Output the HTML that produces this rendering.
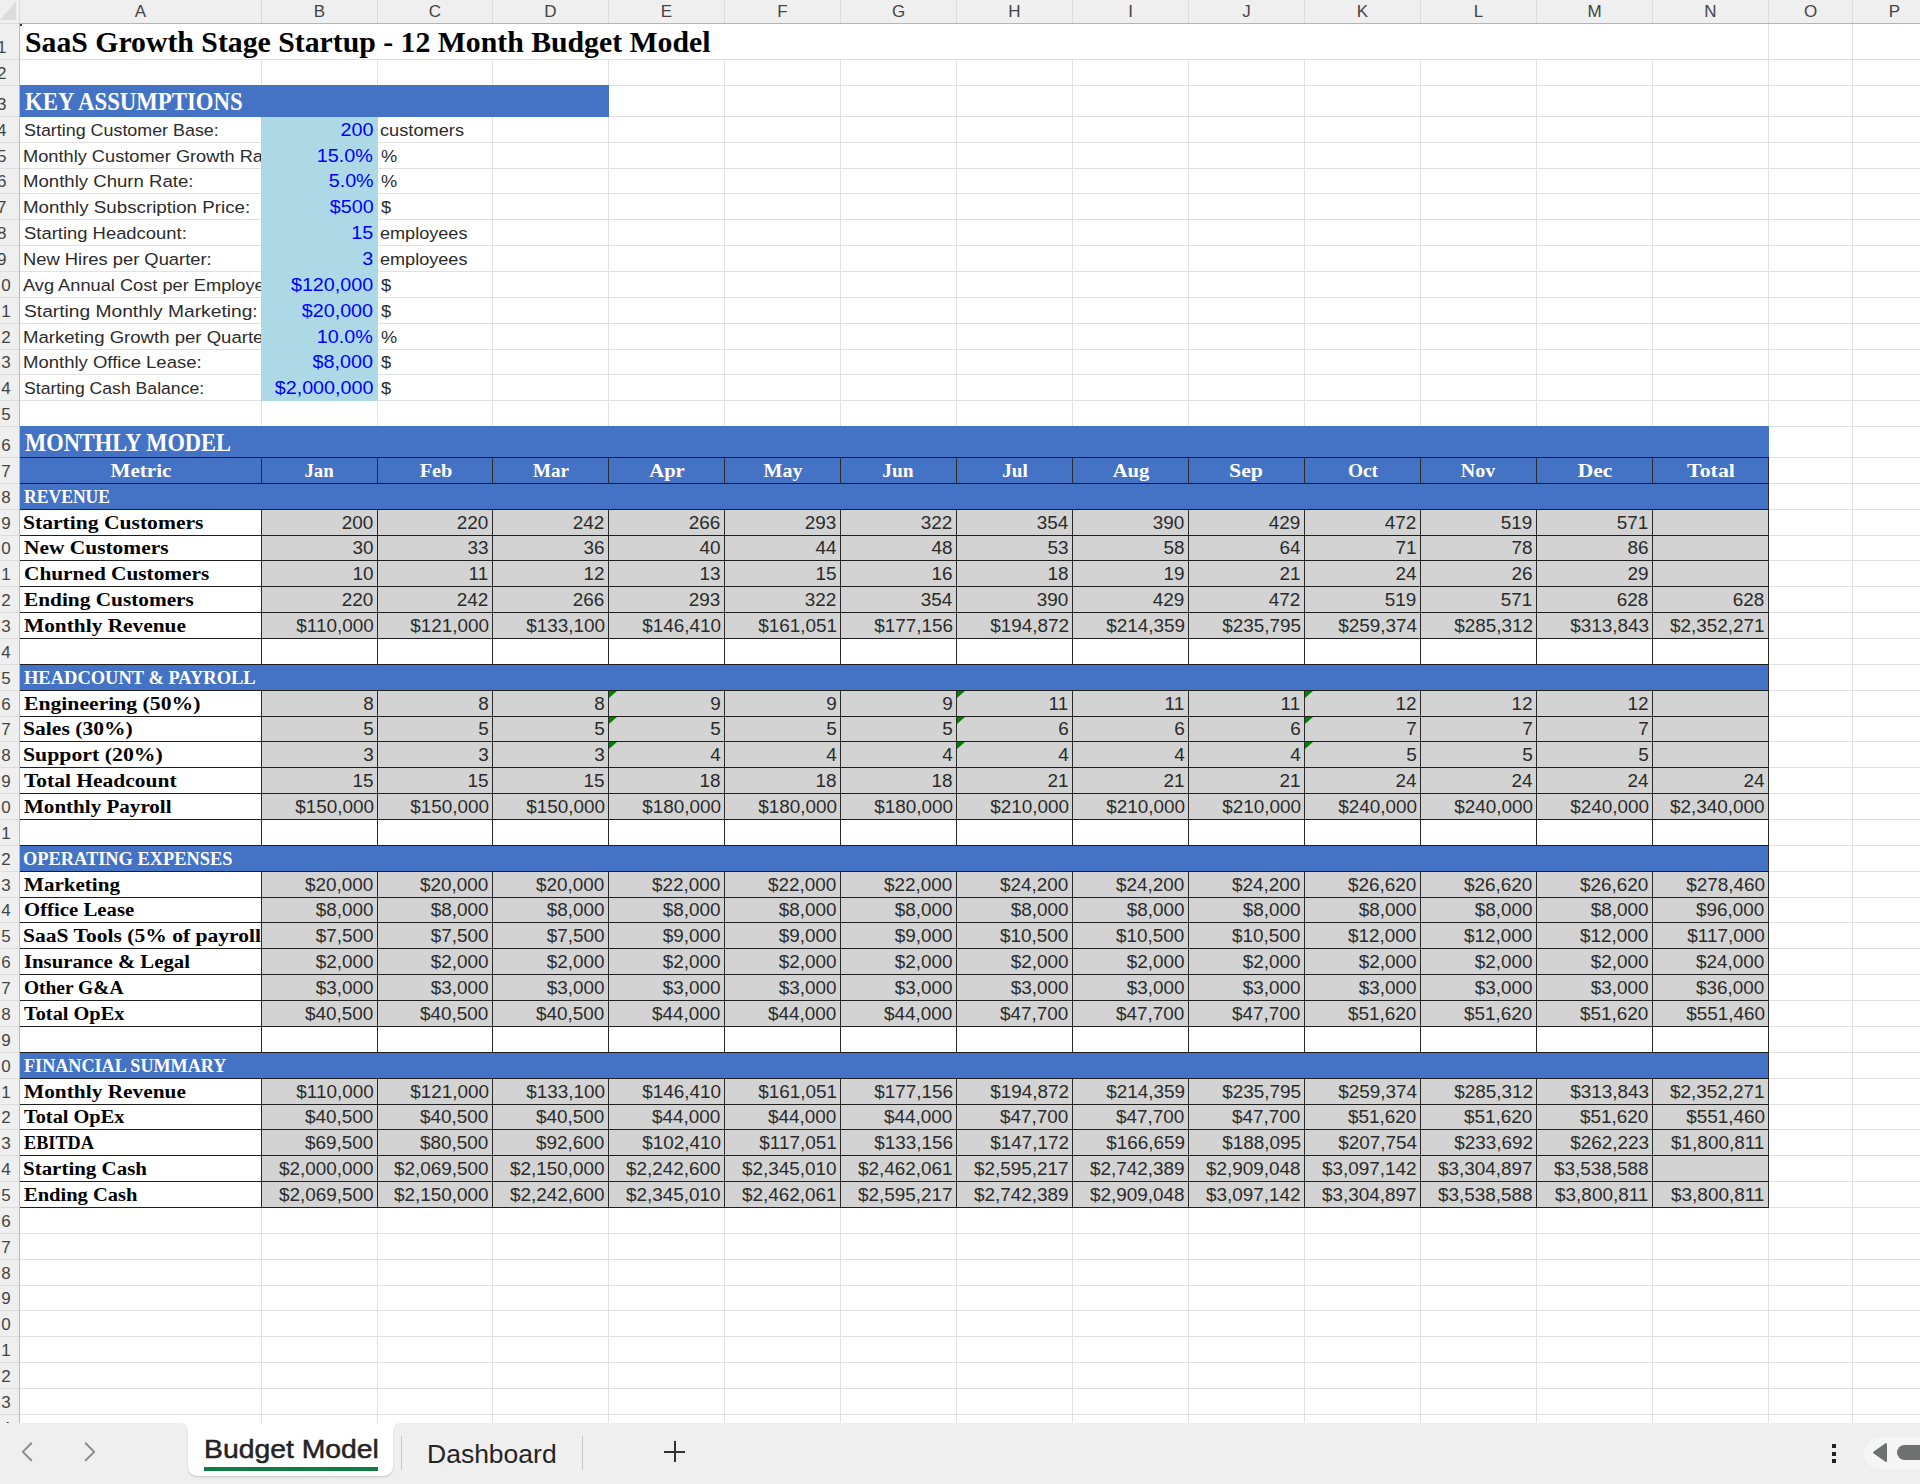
<!DOCTYPE html>
<html><head><meta charset="utf-8"><style>
html,body{margin:0;padding:0;}
body{width:1920px;height:1484px;overflow:hidden;position:relative;background:#fff;}
body div{position:absolute;}
.t{white-space:nowrap;}
</style></head><body>
<div style="left:261px;top:23px;width:1px;height:1400px;background:#e1e1e1;"></div>
<div style="left:377px;top:23px;width:1px;height:1400px;background:#e1e1e1;"></div>
<div style="left:492px;top:23px;width:1px;height:1400px;background:#e1e1e1;"></div>
<div style="left:608px;top:23px;width:1px;height:1400px;background:#e1e1e1;"></div>
<div style="left:724px;top:23px;width:1px;height:1400px;background:#e1e1e1;"></div>
<div style="left:840px;top:23px;width:1px;height:1400px;background:#e1e1e1;"></div>
<div style="left:956px;top:23px;width:1px;height:1400px;background:#e1e1e1;"></div>
<div style="left:1072px;top:23px;width:1px;height:1400px;background:#e1e1e1;"></div>
<div style="left:1188px;top:23px;width:1px;height:1400px;background:#e1e1e1;"></div>
<div style="left:1304px;top:23px;width:1px;height:1400px;background:#e1e1e1;"></div>
<div style="left:1420px;top:23px;width:1px;height:1400px;background:#e1e1e1;"></div>
<div style="left:1536px;top:23px;width:1px;height:1400px;background:#e1e1e1;"></div>
<div style="left:1652px;top:23px;width:1px;height:1400px;background:#e1e1e1;"></div>
<div style="left:1768px;top:23px;width:1px;height:1400px;background:#e1e1e1;"></div>
<div style="left:1852px;top:23px;width:1px;height:1400px;background:#e1e1e1;"></div>
<div style="left:20px;top:59px;width:1900px;height:1px;background:#e1e1e1;"></div>
<div style="left:20px;top:85px;width:1900px;height:1px;background:#e1e1e1;"></div>
<div style="left:20px;top:116px;width:1900px;height:1px;background:#e1e1e1;"></div>
<div style="left:20px;top:142px;width:1900px;height:1px;background:#e1e1e1;"></div>
<div style="left:20px;top:168px;width:1900px;height:1px;background:#e1e1e1;"></div>
<div style="left:20px;top:193px;width:1900px;height:1px;background:#e1e1e1;"></div>
<div style="left:20px;top:219px;width:1900px;height:1px;background:#e1e1e1;"></div>
<div style="left:20px;top:245px;width:1900px;height:1px;background:#e1e1e1;"></div>
<div style="left:20px;top:271px;width:1900px;height:1px;background:#e1e1e1;"></div>
<div style="left:20px;top:297px;width:1900px;height:1px;background:#e1e1e1;"></div>
<div style="left:20px;top:323px;width:1900px;height:1px;background:#e1e1e1;"></div>
<div style="left:20px;top:349px;width:1900px;height:1px;background:#e1e1e1;"></div>
<div style="left:20px;top:374px;width:1900px;height:1px;background:#e1e1e1;"></div>
<div style="left:20px;top:400px;width:1900px;height:1px;background:#e1e1e1;"></div>
<div style="left:20px;top:426px;width:1900px;height:1px;background:#e1e1e1;"></div>
<div style="left:20px;top:457px;width:1900px;height:1px;background:#e1e1e1;"></div>
<div style="left:20px;top:483px;width:1900px;height:1px;background:#e1e1e1;"></div>
<div style="left:20px;top:509px;width:1900px;height:1px;background:#e1e1e1;"></div>
<div style="left:20px;top:535px;width:1900px;height:1px;background:#e1e1e1;"></div>
<div style="left:20px;top:560px;width:1900px;height:1px;background:#e1e1e1;"></div>
<div style="left:20px;top:586px;width:1900px;height:1px;background:#e1e1e1;"></div>
<div style="left:20px;top:612px;width:1900px;height:1px;background:#e1e1e1;"></div>
<div style="left:20px;top:638px;width:1900px;height:1px;background:#e1e1e1;"></div>
<div style="left:20px;top:664px;width:1900px;height:1px;background:#e1e1e1;"></div>
<div style="left:20px;top:690px;width:1900px;height:1px;background:#e1e1e1;"></div>
<div style="left:20px;top:716px;width:1900px;height:1px;background:#e1e1e1;"></div>
<div style="left:20px;top:741px;width:1900px;height:1px;background:#e1e1e1;"></div>
<div style="left:20px;top:767px;width:1900px;height:1px;background:#e1e1e1;"></div>
<div style="left:20px;top:793px;width:1900px;height:1px;background:#e1e1e1;"></div>
<div style="left:20px;top:819px;width:1900px;height:1px;background:#e1e1e1;"></div>
<div style="left:20px;top:845px;width:1900px;height:1px;background:#e1e1e1;"></div>
<div style="left:20px;top:871px;width:1900px;height:1px;background:#e1e1e1;"></div>
<div style="left:20px;top:897px;width:1900px;height:1px;background:#e1e1e1;"></div>
<div style="left:20px;top:922px;width:1900px;height:1px;background:#e1e1e1;"></div>
<div style="left:20px;top:948px;width:1900px;height:1px;background:#e1e1e1;"></div>
<div style="left:20px;top:974px;width:1900px;height:1px;background:#e1e1e1;"></div>
<div style="left:20px;top:1000px;width:1900px;height:1px;background:#e1e1e1;"></div>
<div style="left:20px;top:1026px;width:1900px;height:1px;background:#e1e1e1;"></div>
<div style="left:20px;top:1052px;width:1900px;height:1px;background:#e1e1e1;"></div>
<div style="left:20px;top:1078px;width:1900px;height:1px;background:#e1e1e1;"></div>
<div style="left:20px;top:1104px;width:1900px;height:1px;background:#e1e1e1;"></div>
<div style="left:20px;top:1129px;width:1900px;height:1px;background:#e1e1e1;"></div>
<div style="left:20px;top:1155px;width:1900px;height:1px;background:#e1e1e1;"></div>
<div style="left:20px;top:1181px;width:1900px;height:1px;background:#e1e1e1;"></div>
<div style="left:20px;top:1207px;width:1900px;height:1px;background:#e1e1e1;"></div>
<div style="left:20px;top:1233px;width:1900px;height:1px;background:#e1e1e1;"></div>
<div style="left:20px;top:1259px;width:1900px;height:1px;background:#e1e1e1;"></div>
<div style="left:20px;top:1285px;width:1900px;height:1px;background:#e1e1e1;"></div>
<div style="left:20px;top:1310px;width:1900px;height:1px;background:#e1e1e1;"></div>
<div style="left:20px;top:1336px;width:1900px;height:1px;background:#e1e1e1;"></div>
<div style="left:20px;top:1362px;width:1900px;height:1px;background:#e1e1e1;"></div>
<div style="left:20px;top:1388px;width:1900px;height:1px;background:#e1e1e1;"></div>
<div style="left:20px;top:1414px;width:1900px;height:1px;background:#e1e1e1;"></div>
<div style="left:20px;top:24px;width:1748px;height:35px;background:#fff;"></div>
<div style="left:20px;top:85px;width:589px;height:32px;background:#4472c4;"></div>
<div style="left:261px;top:117px;width:117px;height:284px;background:#add8e6;"></div>
<div style="left:20px;top:426px;width:1749px;height:31px;background:#4472c4;"></div>
<div style="left:20px;top:457px;width:1748px;height:26px;background:#4472c4;"></div>
<div style="left:20px;top:457px;width:1748px;height:26px;background:#4472c4;"></div>
<div style="left:20px;top:483px;width:1748px;height:26px;background:#4472c4;"></div>
<div style="left:20px;top:509px;width:241px;height:26px;background:#fff;"></div>
<div style="left:261px;top:509px;width:1507px;height:26px;background:#d3d3d3;"></div>
<div style="left:20px;top:535px;width:241px;height:25px;background:#fff;"></div>
<div style="left:261px;top:535px;width:1507px;height:25px;background:#d3d3d3;"></div>
<div style="left:20px;top:560px;width:241px;height:26px;background:#fff;"></div>
<div style="left:261px;top:560px;width:1507px;height:26px;background:#d3d3d3;"></div>
<div style="left:20px;top:586px;width:241px;height:26px;background:#fff;"></div>
<div style="left:261px;top:586px;width:1507px;height:26px;background:#d3d3d3;"></div>
<div style="left:20px;top:612px;width:241px;height:26px;background:#fff;"></div>
<div style="left:261px;top:612px;width:1507px;height:26px;background:#d3d3d3;"></div>
<div style="left:20px;top:638px;width:1748px;height:26px;background:#fff;"></div>
<div style="left:20px;top:664px;width:1748px;height:26px;background:#4472c4;"></div>
<div style="left:20px;top:690px;width:241px;height:26px;background:#fff;"></div>
<div style="left:261px;top:690px;width:1507px;height:26px;background:#d3d3d3;"></div>
<div style="left:20px;top:716px;width:241px;height:25px;background:#fff;"></div>
<div style="left:261px;top:716px;width:1507px;height:25px;background:#d3d3d3;"></div>
<div style="left:20px;top:741px;width:241px;height:26px;background:#fff;"></div>
<div style="left:261px;top:741px;width:1507px;height:26px;background:#d3d3d3;"></div>
<div style="left:20px;top:767px;width:241px;height:26px;background:#fff;"></div>
<div style="left:261px;top:767px;width:1507px;height:26px;background:#d3d3d3;"></div>
<div style="left:20px;top:793px;width:241px;height:26px;background:#fff;"></div>
<div style="left:261px;top:793px;width:1507px;height:26px;background:#d3d3d3;"></div>
<div style="left:20px;top:819px;width:1748px;height:26px;background:#fff;"></div>
<div style="left:20px;top:845px;width:1748px;height:26px;background:#4472c4;"></div>
<div style="left:20px;top:871px;width:241px;height:26px;background:#fff;"></div>
<div style="left:261px;top:871px;width:1507px;height:26px;background:#d3d3d3;"></div>
<div style="left:20px;top:897px;width:241px;height:25px;background:#fff;"></div>
<div style="left:261px;top:897px;width:1507px;height:25px;background:#d3d3d3;"></div>
<div style="left:20px;top:922px;width:241px;height:26px;background:#fff;"></div>
<div style="left:261px;top:922px;width:1507px;height:26px;background:#d3d3d3;"></div>
<div style="left:20px;top:948px;width:241px;height:26px;background:#fff;"></div>
<div style="left:261px;top:948px;width:1507px;height:26px;background:#d3d3d3;"></div>
<div style="left:20px;top:974px;width:241px;height:26px;background:#fff;"></div>
<div style="left:261px;top:974px;width:1507px;height:26px;background:#d3d3d3;"></div>
<div style="left:20px;top:1000px;width:241px;height:26px;background:#fff;"></div>
<div style="left:261px;top:1000px;width:1507px;height:26px;background:#d3d3d3;"></div>
<div style="left:20px;top:1026px;width:1748px;height:26px;background:#fff;"></div>
<div style="left:20px;top:1052px;width:1748px;height:26px;background:#4472c4;"></div>
<div style="left:20px;top:1078px;width:241px;height:26px;background:#fff;"></div>
<div style="left:261px;top:1078px;width:1507px;height:26px;background:#d3d3d3;"></div>
<div style="left:20px;top:1104px;width:241px;height:25px;background:#fff;"></div>
<div style="left:261px;top:1104px;width:1507px;height:25px;background:#d3d3d3;"></div>
<div style="left:20px;top:1129px;width:241px;height:26px;background:#fff;"></div>
<div style="left:261px;top:1129px;width:1507px;height:26px;background:#d3d3d3;"></div>
<div style="left:20px;top:1155px;width:241px;height:26px;background:#fff;"></div>
<div style="left:261px;top:1155px;width:1507px;height:26px;background:#d3d3d3;"></div>
<div style="left:20px;top:1181px;width:241px;height:26px;background:#fff;"></div>
<div style="left:261px;top:1181px;width:1507px;height:26px;background:#d3d3d3;"></div>
<div style="left:20px;top:457px;width:1749px;height:1px;background:#1e1e1e;"></div>
<div style="left:20px;top:483px;width:1749px;height:1px;background:#1e1e1e;"></div>
<div style="left:20px;top:509px;width:1749px;height:1px;background:#1e1e1e;"></div>
<div style="left:20px;top:535px;width:1749px;height:1px;background:#1e1e1e;"></div>
<div style="left:20px;top:560px;width:1749px;height:1px;background:#1e1e1e;"></div>
<div style="left:20px;top:586px;width:1749px;height:1px;background:#1e1e1e;"></div>
<div style="left:20px;top:612px;width:1749px;height:1px;background:#1e1e1e;"></div>
<div style="left:20px;top:638px;width:1749px;height:1px;background:#1e1e1e;"></div>
<div style="left:20px;top:664px;width:1749px;height:1px;background:#1e1e1e;"></div>
<div style="left:20px;top:690px;width:1749px;height:1px;background:#1e1e1e;"></div>
<div style="left:20px;top:716px;width:1749px;height:1px;background:#1e1e1e;"></div>
<div style="left:20px;top:741px;width:1749px;height:1px;background:#1e1e1e;"></div>
<div style="left:20px;top:767px;width:1749px;height:1px;background:#1e1e1e;"></div>
<div style="left:20px;top:793px;width:1749px;height:1px;background:#1e1e1e;"></div>
<div style="left:20px;top:819px;width:1749px;height:1px;background:#1e1e1e;"></div>
<div style="left:20px;top:845px;width:1749px;height:1px;background:#1e1e1e;"></div>
<div style="left:20px;top:871px;width:1749px;height:1px;background:#1e1e1e;"></div>
<div style="left:20px;top:897px;width:1749px;height:1px;background:#1e1e1e;"></div>
<div style="left:20px;top:922px;width:1749px;height:1px;background:#1e1e1e;"></div>
<div style="left:20px;top:948px;width:1749px;height:1px;background:#1e1e1e;"></div>
<div style="left:20px;top:974px;width:1749px;height:1px;background:#1e1e1e;"></div>
<div style="left:20px;top:1000px;width:1749px;height:1px;background:#1e1e1e;"></div>
<div style="left:20px;top:1026px;width:1749px;height:1px;background:#1e1e1e;"></div>
<div style="left:20px;top:1052px;width:1749px;height:1px;background:#1e1e1e;"></div>
<div style="left:20px;top:1078px;width:1749px;height:1px;background:#1e1e1e;"></div>
<div style="left:20px;top:1104px;width:1749px;height:1px;background:#1e1e1e;"></div>
<div style="left:20px;top:1129px;width:1749px;height:1px;background:#1e1e1e;"></div>
<div style="left:20px;top:1155px;width:1749px;height:1px;background:#1e1e1e;"></div>
<div style="left:20px;top:1181px;width:1749px;height:1px;background:#1e1e1e;"></div>
<div style="left:20px;top:1207px;width:1749px;height:1px;background:#1e1e1e;"></div>
<div style="left:261px;top:457px;width:1px;height:27px;background:#2a2a2a;"></div>
<div style="left:377px;top:457px;width:1px;height:27px;background:#2a2a2a;"></div>
<div style="left:492px;top:457px;width:1px;height:27px;background:#2a2a2a;"></div>
<div style="left:608px;top:457px;width:1px;height:27px;background:#2a2a2a;"></div>
<div style="left:724px;top:457px;width:1px;height:27px;background:#2a2a2a;"></div>
<div style="left:840px;top:457px;width:1px;height:27px;background:#2a2a2a;"></div>
<div style="left:956px;top:457px;width:1px;height:27px;background:#2a2a2a;"></div>
<div style="left:1072px;top:457px;width:1px;height:27px;background:#2a2a2a;"></div>
<div style="left:1188px;top:457px;width:1px;height:27px;background:#2a2a2a;"></div>
<div style="left:1304px;top:457px;width:1px;height:27px;background:#2a2a2a;"></div>
<div style="left:1420px;top:457px;width:1px;height:27px;background:#2a2a2a;"></div>
<div style="left:1536px;top:457px;width:1px;height:27px;background:#2a2a2a;"></div>
<div style="left:1652px;top:457px;width:1px;height:27px;background:#2a2a2a;"></div>
<div style="left:1768px;top:457px;width:1px;height:27px;background:#2a2a2a;"></div>
<div style="left:1768px;top:483px;width:1px;height:27px;background:#2a2a2a;"></div>
<div style="left:261px;top:509px;width:1px;height:27px;background:#2a2a2a;"></div>
<div style="left:377px;top:509px;width:1px;height:27px;background:#2a2a2a;"></div>
<div style="left:492px;top:509px;width:1px;height:27px;background:#2a2a2a;"></div>
<div style="left:608px;top:509px;width:1px;height:27px;background:#2a2a2a;"></div>
<div style="left:724px;top:509px;width:1px;height:27px;background:#2a2a2a;"></div>
<div style="left:840px;top:509px;width:1px;height:27px;background:#2a2a2a;"></div>
<div style="left:956px;top:509px;width:1px;height:27px;background:#2a2a2a;"></div>
<div style="left:1072px;top:509px;width:1px;height:27px;background:#2a2a2a;"></div>
<div style="left:1188px;top:509px;width:1px;height:27px;background:#2a2a2a;"></div>
<div style="left:1304px;top:509px;width:1px;height:27px;background:#2a2a2a;"></div>
<div style="left:1420px;top:509px;width:1px;height:27px;background:#2a2a2a;"></div>
<div style="left:1536px;top:509px;width:1px;height:27px;background:#2a2a2a;"></div>
<div style="left:1652px;top:509px;width:1px;height:27px;background:#2a2a2a;"></div>
<div style="left:1768px;top:509px;width:1px;height:27px;background:#2a2a2a;"></div>
<div style="left:261px;top:535px;width:1px;height:26px;background:#2a2a2a;"></div>
<div style="left:377px;top:535px;width:1px;height:26px;background:#2a2a2a;"></div>
<div style="left:492px;top:535px;width:1px;height:26px;background:#2a2a2a;"></div>
<div style="left:608px;top:535px;width:1px;height:26px;background:#2a2a2a;"></div>
<div style="left:724px;top:535px;width:1px;height:26px;background:#2a2a2a;"></div>
<div style="left:840px;top:535px;width:1px;height:26px;background:#2a2a2a;"></div>
<div style="left:956px;top:535px;width:1px;height:26px;background:#2a2a2a;"></div>
<div style="left:1072px;top:535px;width:1px;height:26px;background:#2a2a2a;"></div>
<div style="left:1188px;top:535px;width:1px;height:26px;background:#2a2a2a;"></div>
<div style="left:1304px;top:535px;width:1px;height:26px;background:#2a2a2a;"></div>
<div style="left:1420px;top:535px;width:1px;height:26px;background:#2a2a2a;"></div>
<div style="left:1536px;top:535px;width:1px;height:26px;background:#2a2a2a;"></div>
<div style="left:1652px;top:535px;width:1px;height:26px;background:#2a2a2a;"></div>
<div style="left:1768px;top:535px;width:1px;height:26px;background:#2a2a2a;"></div>
<div style="left:261px;top:560px;width:1px;height:27px;background:#2a2a2a;"></div>
<div style="left:377px;top:560px;width:1px;height:27px;background:#2a2a2a;"></div>
<div style="left:492px;top:560px;width:1px;height:27px;background:#2a2a2a;"></div>
<div style="left:608px;top:560px;width:1px;height:27px;background:#2a2a2a;"></div>
<div style="left:724px;top:560px;width:1px;height:27px;background:#2a2a2a;"></div>
<div style="left:840px;top:560px;width:1px;height:27px;background:#2a2a2a;"></div>
<div style="left:956px;top:560px;width:1px;height:27px;background:#2a2a2a;"></div>
<div style="left:1072px;top:560px;width:1px;height:27px;background:#2a2a2a;"></div>
<div style="left:1188px;top:560px;width:1px;height:27px;background:#2a2a2a;"></div>
<div style="left:1304px;top:560px;width:1px;height:27px;background:#2a2a2a;"></div>
<div style="left:1420px;top:560px;width:1px;height:27px;background:#2a2a2a;"></div>
<div style="left:1536px;top:560px;width:1px;height:27px;background:#2a2a2a;"></div>
<div style="left:1652px;top:560px;width:1px;height:27px;background:#2a2a2a;"></div>
<div style="left:1768px;top:560px;width:1px;height:27px;background:#2a2a2a;"></div>
<div style="left:261px;top:586px;width:1px;height:27px;background:#2a2a2a;"></div>
<div style="left:377px;top:586px;width:1px;height:27px;background:#2a2a2a;"></div>
<div style="left:492px;top:586px;width:1px;height:27px;background:#2a2a2a;"></div>
<div style="left:608px;top:586px;width:1px;height:27px;background:#2a2a2a;"></div>
<div style="left:724px;top:586px;width:1px;height:27px;background:#2a2a2a;"></div>
<div style="left:840px;top:586px;width:1px;height:27px;background:#2a2a2a;"></div>
<div style="left:956px;top:586px;width:1px;height:27px;background:#2a2a2a;"></div>
<div style="left:1072px;top:586px;width:1px;height:27px;background:#2a2a2a;"></div>
<div style="left:1188px;top:586px;width:1px;height:27px;background:#2a2a2a;"></div>
<div style="left:1304px;top:586px;width:1px;height:27px;background:#2a2a2a;"></div>
<div style="left:1420px;top:586px;width:1px;height:27px;background:#2a2a2a;"></div>
<div style="left:1536px;top:586px;width:1px;height:27px;background:#2a2a2a;"></div>
<div style="left:1652px;top:586px;width:1px;height:27px;background:#2a2a2a;"></div>
<div style="left:1768px;top:586px;width:1px;height:27px;background:#2a2a2a;"></div>
<div style="left:261px;top:612px;width:1px;height:27px;background:#2a2a2a;"></div>
<div style="left:377px;top:612px;width:1px;height:27px;background:#2a2a2a;"></div>
<div style="left:492px;top:612px;width:1px;height:27px;background:#2a2a2a;"></div>
<div style="left:608px;top:612px;width:1px;height:27px;background:#2a2a2a;"></div>
<div style="left:724px;top:612px;width:1px;height:27px;background:#2a2a2a;"></div>
<div style="left:840px;top:612px;width:1px;height:27px;background:#2a2a2a;"></div>
<div style="left:956px;top:612px;width:1px;height:27px;background:#2a2a2a;"></div>
<div style="left:1072px;top:612px;width:1px;height:27px;background:#2a2a2a;"></div>
<div style="left:1188px;top:612px;width:1px;height:27px;background:#2a2a2a;"></div>
<div style="left:1304px;top:612px;width:1px;height:27px;background:#2a2a2a;"></div>
<div style="left:1420px;top:612px;width:1px;height:27px;background:#2a2a2a;"></div>
<div style="left:1536px;top:612px;width:1px;height:27px;background:#2a2a2a;"></div>
<div style="left:1652px;top:612px;width:1px;height:27px;background:#2a2a2a;"></div>
<div style="left:1768px;top:612px;width:1px;height:27px;background:#2a2a2a;"></div>
<div style="left:261px;top:638px;width:1px;height:27px;background:#2a2a2a;"></div>
<div style="left:377px;top:638px;width:1px;height:27px;background:#2a2a2a;"></div>
<div style="left:492px;top:638px;width:1px;height:27px;background:#2a2a2a;"></div>
<div style="left:608px;top:638px;width:1px;height:27px;background:#2a2a2a;"></div>
<div style="left:724px;top:638px;width:1px;height:27px;background:#2a2a2a;"></div>
<div style="left:840px;top:638px;width:1px;height:27px;background:#2a2a2a;"></div>
<div style="left:956px;top:638px;width:1px;height:27px;background:#2a2a2a;"></div>
<div style="left:1072px;top:638px;width:1px;height:27px;background:#2a2a2a;"></div>
<div style="left:1188px;top:638px;width:1px;height:27px;background:#2a2a2a;"></div>
<div style="left:1304px;top:638px;width:1px;height:27px;background:#2a2a2a;"></div>
<div style="left:1420px;top:638px;width:1px;height:27px;background:#2a2a2a;"></div>
<div style="left:1536px;top:638px;width:1px;height:27px;background:#2a2a2a;"></div>
<div style="left:1652px;top:638px;width:1px;height:27px;background:#2a2a2a;"></div>
<div style="left:1768px;top:638px;width:1px;height:27px;background:#2a2a2a;"></div>
<div style="left:1768px;top:664px;width:1px;height:27px;background:#2a2a2a;"></div>
<div style="left:261px;top:690px;width:1px;height:27px;background:#2a2a2a;"></div>
<div style="left:377px;top:690px;width:1px;height:27px;background:#2a2a2a;"></div>
<div style="left:492px;top:690px;width:1px;height:27px;background:#2a2a2a;"></div>
<div style="left:608px;top:690px;width:1px;height:27px;background:#2a2a2a;"></div>
<div style="left:724px;top:690px;width:1px;height:27px;background:#2a2a2a;"></div>
<div style="left:840px;top:690px;width:1px;height:27px;background:#2a2a2a;"></div>
<div style="left:956px;top:690px;width:1px;height:27px;background:#2a2a2a;"></div>
<div style="left:1072px;top:690px;width:1px;height:27px;background:#2a2a2a;"></div>
<div style="left:1188px;top:690px;width:1px;height:27px;background:#2a2a2a;"></div>
<div style="left:1304px;top:690px;width:1px;height:27px;background:#2a2a2a;"></div>
<div style="left:1420px;top:690px;width:1px;height:27px;background:#2a2a2a;"></div>
<div style="left:1536px;top:690px;width:1px;height:27px;background:#2a2a2a;"></div>
<div style="left:1652px;top:690px;width:1px;height:27px;background:#2a2a2a;"></div>
<div style="left:1768px;top:690px;width:1px;height:27px;background:#2a2a2a;"></div>
<div style="left:261px;top:716px;width:1px;height:26px;background:#2a2a2a;"></div>
<div style="left:377px;top:716px;width:1px;height:26px;background:#2a2a2a;"></div>
<div style="left:492px;top:716px;width:1px;height:26px;background:#2a2a2a;"></div>
<div style="left:608px;top:716px;width:1px;height:26px;background:#2a2a2a;"></div>
<div style="left:724px;top:716px;width:1px;height:26px;background:#2a2a2a;"></div>
<div style="left:840px;top:716px;width:1px;height:26px;background:#2a2a2a;"></div>
<div style="left:956px;top:716px;width:1px;height:26px;background:#2a2a2a;"></div>
<div style="left:1072px;top:716px;width:1px;height:26px;background:#2a2a2a;"></div>
<div style="left:1188px;top:716px;width:1px;height:26px;background:#2a2a2a;"></div>
<div style="left:1304px;top:716px;width:1px;height:26px;background:#2a2a2a;"></div>
<div style="left:1420px;top:716px;width:1px;height:26px;background:#2a2a2a;"></div>
<div style="left:1536px;top:716px;width:1px;height:26px;background:#2a2a2a;"></div>
<div style="left:1652px;top:716px;width:1px;height:26px;background:#2a2a2a;"></div>
<div style="left:1768px;top:716px;width:1px;height:26px;background:#2a2a2a;"></div>
<div style="left:261px;top:741px;width:1px;height:27px;background:#2a2a2a;"></div>
<div style="left:377px;top:741px;width:1px;height:27px;background:#2a2a2a;"></div>
<div style="left:492px;top:741px;width:1px;height:27px;background:#2a2a2a;"></div>
<div style="left:608px;top:741px;width:1px;height:27px;background:#2a2a2a;"></div>
<div style="left:724px;top:741px;width:1px;height:27px;background:#2a2a2a;"></div>
<div style="left:840px;top:741px;width:1px;height:27px;background:#2a2a2a;"></div>
<div style="left:956px;top:741px;width:1px;height:27px;background:#2a2a2a;"></div>
<div style="left:1072px;top:741px;width:1px;height:27px;background:#2a2a2a;"></div>
<div style="left:1188px;top:741px;width:1px;height:27px;background:#2a2a2a;"></div>
<div style="left:1304px;top:741px;width:1px;height:27px;background:#2a2a2a;"></div>
<div style="left:1420px;top:741px;width:1px;height:27px;background:#2a2a2a;"></div>
<div style="left:1536px;top:741px;width:1px;height:27px;background:#2a2a2a;"></div>
<div style="left:1652px;top:741px;width:1px;height:27px;background:#2a2a2a;"></div>
<div style="left:1768px;top:741px;width:1px;height:27px;background:#2a2a2a;"></div>
<div style="left:261px;top:767px;width:1px;height:27px;background:#2a2a2a;"></div>
<div style="left:377px;top:767px;width:1px;height:27px;background:#2a2a2a;"></div>
<div style="left:492px;top:767px;width:1px;height:27px;background:#2a2a2a;"></div>
<div style="left:608px;top:767px;width:1px;height:27px;background:#2a2a2a;"></div>
<div style="left:724px;top:767px;width:1px;height:27px;background:#2a2a2a;"></div>
<div style="left:840px;top:767px;width:1px;height:27px;background:#2a2a2a;"></div>
<div style="left:956px;top:767px;width:1px;height:27px;background:#2a2a2a;"></div>
<div style="left:1072px;top:767px;width:1px;height:27px;background:#2a2a2a;"></div>
<div style="left:1188px;top:767px;width:1px;height:27px;background:#2a2a2a;"></div>
<div style="left:1304px;top:767px;width:1px;height:27px;background:#2a2a2a;"></div>
<div style="left:1420px;top:767px;width:1px;height:27px;background:#2a2a2a;"></div>
<div style="left:1536px;top:767px;width:1px;height:27px;background:#2a2a2a;"></div>
<div style="left:1652px;top:767px;width:1px;height:27px;background:#2a2a2a;"></div>
<div style="left:1768px;top:767px;width:1px;height:27px;background:#2a2a2a;"></div>
<div style="left:261px;top:793px;width:1px;height:27px;background:#2a2a2a;"></div>
<div style="left:377px;top:793px;width:1px;height:27px;background:#2a2a2a;"></div>
<div style="left:492px;top:793px;width:1px;height:27px;background:#2a2a2a;"></div>
<div style="left:608px;top:793px;width:1px;height:27px;background:#2a2a2a;"></div>
<div style="left:724px;top:793px;width:1px;height:27px;background:#2a2a2a;"></div>
<div style="left:840px;top:793px;width:1px;height:27px;background:#2a2a2a;"></div>
<div style="left:956px;top:793px;width:1px;height:27px;background:#2a2a2a;"></div>
<div style="left:1072px;top:793px;width:1px;height:27px;background:#2a2a2a;"></div>
<div style="left:1188px;top:793px;width:1px;height:27px;background:#2a2a2a;"></div>
<div style="left:1304px;top:793px;width:1px;height:27px;background:#2a2a2a;"></div>
<div style="left:1420px;top:793px;width:1px;height:27px;background:#2a2a2a;"></div>
<div style="left:1536px;top:793px;width:1px;height:27px;background:#2a2a2a;"></div>
<div style="left:1652px;top:793px;width:1px;height:27px;background:#2a2a2a;"></div>
<div style="left:1768px;top:793px;width:1px;height:27px;background:#2a2a2a;"></div>
<div style="left:261px;top:819px;width:1px;height:27px;background:#2a2a2a;"></div>
<div style="left:377px;top:819px;width:1px;height:27px;background:#2a2a2a;"></div>
<div style="left:492px;top:819px;width:1px;height:27px;background:#2a2a2a;"></div>
<div style="left:608px;top:819px;width:1px;height:27px;background:#2a2a2a;"></div>
<div style="left:724px;top:819px;width:1px;height:27px;background:#2a2a2a;"></div>
<div style="left:840px;top:819px;width:1px;height:27px;background:#2a2a2a;"></div>
<div style="left:956px;top:819px;width:1px;height:27px;background:#2a2a2a;"></div>
<div style="left:1072px;top:819px;width:1px;height:27px;background:#2a2a2a;"></div>
<div style="left:1188px;top:819px;width:1px;height:27px;background:#2a2a2a;"></div>
<div style="left:1304px;top:819px;width:1px;height:27px;background:#2a2a2a;"></div>
<div style="left:1420px;top:819px;width:1px;height:27px;background:#2a2a2a;"></div>
<div style="left:1536px;top:819px;width:1px;height:27px;background:#2a2a2a;"></div>
<div style="left:1652px;top:819px;width:1px;height:27px;background:#2a2a2a;"></div>
<div style="left:1768px;top:819px;width:1px;height:27px;background:#2a2a2a;"></div>
<div style="left:1768px;top:845px;width:1px;height:27px;background:#2a2a2a;"></div>
<div style="left:261px;top:871px;width:1px;height:27px;background:#2a2a2a;"></div>
<div style="left:377px;top:871px;width:1px;height:27px;background:#2a2a2a;"></div>
<div style="left:492px;top:871px;width:1px;height:27px;background:#2a2a2a;"></div>
<div style="left:608px;top:871px;width:1px;height:27px;background:#2a2a2a;"></div>
<div style="left:724px;top:871px;width:1px;height:27px;background:#2a2a2a;"></div>
<div style="left:840px;top:871px;width:1px;height:27px;background:#2a2a2a;"></div>
<div style="left:956px;top:871px;width:1px;height:27px;background:#2a2a2a;"></div>
<div style="left:1072px;top:871px;width:1px;height:27px;background:#2a2a2a;"></div>
<div style="left:1188px;top:871px;width:1px;height:27px;background:#2a2a2a;"></div>
<div style="left:1304px;top:871px;width:1px;height:27px;background:#2a2a2a;"></div>
<div style="left:1420px;top:871px;width:1px;height:27px;background:#2a2a2a;"></div>
<div style="left:1536px;top:871px;width:1px;height:27px;background:#2a2a2a;"></div>
<div style="left:1652px;top:871px;width:1px;height:27px;background:#2a2a2a;"></div>
<div style="left:1768px;top:871px;width:1px;height:27px;background:#2a2a2a;"></div>
<div style="left:261px;top:897px;width:1px;height:26px;background:#2a2a2a;"></div>
<div style="left:377px;top:897px;width:1px;height:26px;background:#2a2a2a;"></div>
<div style="left:492px;top:897px;width:1px;height:26px;background:#2a2a2a;"></div>
<div style="left:608px;top:897px;width:1px;height:26px;background:#2a2a2a;"></div>
<div style="left:724px;top:897px;width:1px;height:26px;background:#2a2a2a;"></div>
<div style="left:840px;top:897px;width:1px;height:26px;background:#2a2a2a;"></div>
<div style="left:956px;top:897px;width:1px;height:26px;background:#2a2a2a;"></div>
<div style="left:1072px;top:897px;width:1px;height:26px;background:#2a2a2a;"></div>
<div style="left:1188px;top:897px;width:1px;height:26px;background:#2a2a2a;"></div>
<div style="left:1304px;top:897px;width:1px;height:26px;background:#2a2a2a;"></div>
<div style="left:1420px;top:897px;width:1px;height:26px;background:#2a2a2a;"></div>
<div style="left:1536px;top:897px;width:1px;height:26px;background:#2a2a2a;"></div>
<div style="left:1652px;top:897px;width:1px;height:26px;background:#2a2a2a;"></div>
<div style="left:1768px;top:897px;width:1px;height:26px;background:#2a2a2a;"></div>
<div style="left:261px;top:922px;width:1px;height:27px;background:#2a2a2a;"></div>
<div style="left:377px;top:922px;width:1px;height:27px;background:#2a2a2a;"></div>
<div style="left:492px;top:922px;width:1px;height:27px;background:#2a2a2a;"></div>
<div style="left:608px;top:922px;width:1px;height:27px;background:#2a2a2a;"></div>
<div style="left:724px;top:922px;width:1px;height:27px;background:#2a2a2a;"></div>
<div style="left:840px;top:922px;width:1px;height:27px;background:#2a2a2a;"></div>
<div style="left:956px;top:922px;width:1px;height:27px;background:#2a2a2a;"></div>
<div style="left:1072px;top:922px;width:1px;height:27px;background:#2a2a2a;"></div>
<div style="left:1188px;top:922px;width:1px;height:27px;background:#2a2a2a;"></div>
<div style="left:1304px;top:922px;width:1px;height:27px;background:#2a2a2a;"></div>
<div style="left:1420px;top:922px;width:1px;height:27px;background:#2a2a2a;"></div>
<div style="left:1536px;top:922px;width:1px;height:27px;background:#2a2a2a;"></div>
<div style="left:1652px;top:922px;width:1px;height:27px;background:#2a2a2a;"></div>
<div style="left:1768px;top:922px;width:1px;height:27px;background:#2a2a2a;"></div>
<div style="left:261px;top:948px;width:1px;height:27px;background:#2a2a2a;"></div>
<div style="left:377px;top:948px;width:1px;height:27px;background:#2a2a2a;"></div>
<div style="left:492px;top:948px;width:1px;height:27px;background:#2a2a2a;"></div>
<div style="left:608px;top:948px;width:1px;height:27px;background:#2a2a2a;"></div>
<div style="left:724px;top:948px;width:1px;height:27px;background:#2a2a2a;"></div>
<div style="left:840px;top:948px;width:1px;height:27px;background:#2a2a2a;"></div>
<div style="left:956px;top:948px;width:1px;height:27px;background:#2a2a2a;"></div>
<div style="left:1072px;top:948px;width:1px;height:27px;background:#2a2a2a;"></div>
<div style="left:1188px;top:948px;width:1px;height:27px;background:#2a2a2a;"></div>
<div style="left:1304px;top:948px;width:1px;height:27px;background:#2a2a2a;"></div>
<div style="left:1420px;top:948px;width:1px;height:27px;background:#2a2a2a;"></div>
<div style="left:1536px;top:948px;width:1px;height:27px;background:#2a2a2a;"></div>
<div style="left:1652px;top:948px;width:1px;height:27px;background:#2a2a2a;"></div>
<div style="left:1768px;top:948px;width:1px;height:27px;background:#2a2a2a;"></div>
<div style="left:261px;top:974px;width:1px;height:27px;background:#2a2a2a;"></div>
<div style="left:377px;top:974px;width:1px;height:27px;background:#2a2a2a;"></div>
<div style="left:492px;top:974px;width:1px;height:27px;background:#2a2a2a;"></div>
<div style="left:608px;top:974px;width:1px;height:27px;background:#2a2a2a;"></div>
<div style="left:724px;top:974px;width:1px;height:27px;background:#2a2a2a;"></div>
<div style="left:840px;top:974px;width:1px;height:27px;background:#2a2a2a;"></div>
<div style="left:956px;top:974px;width:1px;height:27px;background:#2a2a2a;"></div>
<div style="left:1072px;top:974px;width:1px;height:27px;background:#2a2a2a;"></div>
<div style="left:1188px;top:974px;width:1px;height:27px;background:#2a2a2a;"></div>
<div style="left:1304px;top:974px;width:1px;height:27px;background:#2a2a2a;"></div>
<div style="left:1420px;top:974px;width:1px;height:27px;background:#2a2a2a;"></div>
<div style="left:1536px;top:974px;width:1px;height:27px;background:#2a2a2a;"></div>
<div style="left:1652px;top:974px;width:1px;height:27px;background:#2a2a2a;"></div>
<div style="left:1768px;top:974px;width:1px;height:27px;background:#2a2a2a;"></div>
<div style="left:261px;top:1000px;width:1px;height:27px;background:#2a2a2a;"></div>
<div style="left:377px;top:1000px;width:1px;height:27px;background:#2a2a2a;"></div>
<div style="left:492px;top:1000px;width:1px;height:27px;background:#2a2a2a;"></div>
<div style="left:608px;top:1000px;width:1px;height:27px;background:#2a2a2a;"></div>
<div style="left:724px;top:1000px;width:1px;height:27px;background:#2a2a2a;"></div>
<div style="left:840px;top:1000px;width:1px;height:27px;background:#2a2a2a;"></div>
<div style="left:956px;top:1000px;width:1px;height:27px;background:#2a2a2a;"></div>
<div style="left:1072px;top:1000px;width:1px;height:27px;background:#2a2a2a;"></div>
<div style="left:1188px;top:1000px;width:1px;height:27px;background:#2a2a2a;"></div>
<div style="left:1304px;top:1000px;width:1px;height:27px;background:#2a2a2a;"></div>
<div style="left:1420px;top:1000px;width:1px;height:27px;background:#2a2a2a;"></div>
<div style="left:1536px;top:1000px;width:1px;height:27px;background:#2a2a2a;"></div>
<div style="left:1652px;top:1000px;width:1px;height:27px;background:#2a2a2a;"></div>
<div style="left:1768px;top:1000px;width:1px;height:27px;background:#2a2a2a;"></div>
<div style="left:261px;top:1026px;width:1px;height:27px;background:#2a2a2a;"></div>
<div style="left:377px;top:1026px;width:1px;height:27px;background:#2a2a2a;"></div>
<div style="left:492px;top:1026px;width:1px;height:27px;background:#2a2a2a;"></div>
<div style="left:608px;top:1026px;width:1px;height:27px;background:#2a2a2a;"></div>
<div style="left:724px;top:1026px;width:1px;height:27px;background:#2a2a2a;"></div>
<div style="left:840px;top:1026px;width:1px;height:27px;background:#2a2a2a;"></div>
<div style="left:956px;top:1026px;width:1px;height:27px;background:#2a2a2a;"></div>
<div style="left:1072px;top:1026px;width:1px;height:27px;background:#2a2a2a;"></div>
<div style="left:1188px;top:1026px;width:1px;height:27px;background:#2a2a2a;"></div>
<div style="left:1304px;top:1026px;width:1px;height:27px;background:#2a2a2a;"></div>
<div style="left:1420px;top:1026px;width:1px;height:27px;background:#2a2a2a;"></div>
<div style="left:1536px;top:1026px;width:1px;height:27px;background:#2a2a2a;"></div>
<div style="left:1652px;top:1026px;width:1px;height:27px;background:#2a2a2a;"></div>
<div style="left:1768px;top:1026px;width:1px;height:27px;background:#2a2a2a;"></div>
<div style="left:1768px;top:1052px;width:1px;height:27px;background:#2a2a2a;"></div>
<div style="left:261px;top:1078px;width:1px;height:27px;background:#2a2a2a;"></div>
<div style="left:377px;top:1078px;width:1px;height:27px;background:#2a2a2a;"></div>
<div style="left:492px;top:1078px;width:1px;height:27px;background:#2a2a2a;"></div>
<div style="left:608px;top:1078px;width:1px;height:27px;background:#2a2a2a;"></div>
<div style="left:724px;top:1078px;width:1px;height:27px;background:#2a2a2a;"></div>
<div style="left:840px;top:1078px;width:1px;height:27px;background:#2a2a2a;"></div>
<div style="left:956px;top:1078px;width:1px;height:27px;background:#2a2a2a;"></div>
<div style="left:1072px;top:1078px;width:1px;height:27px;background:#2a2a2a;"></div>
<div style="left:1188px;top:1078px;width:1px;height:27px;background:#2a2a2a;"></div>
<div style="left:1304px;top:1078px;width:1px;height:27px;background:#2a2a2a;"></div>
<div style="left:1420px;top:1078px;width:1px;height:27px;background:#2a2a2a;"></div>
<div style="left:1536px;top:1078px;width:1px;height:27px;background:#2a2a2a;"></div>
<div style="left:1652px;top:1078px;width:1px;height:27px;background:#2a2a2a;"></div>
<div style="left:1768px;top:1078px;width:1px;height:27px;background:#2a2a2a;"></div>
<div style="left:261px;top:1104px;width:1px;height:26px;background:#2a2a2a;"></div>
<div style="left:377px;top:1104px;width:1px;height:26px;background:#2a2a2a;"></div>
<div style="left:492px;top:1104px;width:1px;height:26px;background:#2a2a2a;"></div>
<div style="left:608px;top:1104px;width:1px;height:26px;background:#2a2a2a;"></div>
<div style="left:724px;top:1104px;width:1px;height:26px;background:#2a2a2a;"></div>
<div style="left:840px;top:1104px;width:1px;height:26px;background:#2a2a2a;"></div>
<div style="left:956px;top:1104px;width:1px;height:26px;background:#2a2a2a;"></div>
<div style="left:1072px;top:1104px;width:1px;height:26px;background:#2a2a2a;"></div>
<div style="left:1188px;top:1104px;width:1px;height:26px;background:#2a2a2a;"></div>
<div style="left:1304px;top:1104px;width:1px;height:26px;background:#2a2a2a;"></div>
<div style="left:1420px;top:1104px;width:1px;height:26px;background:#2a2a2a;"></div>
<div style="left:1536px;top:1104px;width:1px;height:26px;background:#2a2a2a;"></div>
<div style="left:1652px;top:1104px;width:1px;height:26px;background:#2a2a2a;"></div>
<div style="left:1768px;top:1104px;width:1px;height:26px;background:#2a2a2a;"></div>
<div style="left:261px;top:1129px;width:1px;height:27px;background:#2a2a2a;"></div>
<div style="left:377px;top:1129px;width:1px;height:27px;background:#2a2a2a;"></div>
<div style="left:492px;top:1129px;width:1px;height:27px;background:#2a2a2a;"></div>
<div style="left:608px;top:1129px;width:1px;height:27px;background:#2a2a2a;"></div>
<div style="left:724px;top:1129px;width:1px;height:27px;background:#2a2a2a;"></div>
<div style="left:840px;top:1129px;width:1px;height:27px;background:#2a2a2a;"></div>
<div style="left:956px;top:1129px;width:1px;height:27px;background:#2a2a2a;"></div>
<div style="left:1072px;top:1129px;width:1px;height:27px;background:#2a2a2a;"></div>
<div style="left:1188px;top:1129px;width:1px;height:27px;background:#2a2a2a;"></div>
<div style="left:1304px;top:1129px;width:1px;height:27px;background:#2a2a2a;"></div>
<div style="left:1420px;top:1129px;width:1px;height:27px;background:#2a2a2a;"></div>
<div style="left:1536px;top:1129px;width:1px;height:27px;background:#2a2a2a;"></div>
<div style="left:1652px;top:1129px;width:1px;height:27px;background:#2a2a2a;"></div>
<div style="left:1768px;top:1129px;width:1px;height:27px;background:#2a2a2a;"></div>
<div style="left:261px;top:1155px;width:1px;height:27px;background:#2a2a2a;"></div>
<div style="left:377px;top:1155px;width:1px;height:27px;background:#2a2a2a;"></div>
<div style="left:492px;top:1155px;width:1px;height:27px;background:#2a2a2a;"></div>
<div style="left:608px;top:1155px;width:1px;height:27px;background:#2a2a2a;"></div>
<div style="left:724px;top:1155px;width:1px;height:27px;background:#2a2a2a;"></div>
<div style="left:840px;top:1155px;width:1px;height:27px;background:#2a2a2a;"></div>
<div style="left:956px;top:1155px;width:1px;height:27px;background:#2a2a2a;"></div>
<div style="left:1072px;top:1155px;width:1px;height:27px;background:#2a2a2a;"></div>
<div style="left:1188px;top:1155px;width:1px;height:27px;background:#2a2a2a;"></div>
<div style="left:1304px;top:1155px;width:1px;height:27px;background:#2a2a2a;"></div>
<div style="left:1420px;top:1155px;width:1px;height:27px;background:#2a2a2a;"></div>
<div style="left:1536px;top:1155px;width:1px;height:27px;background:#2a2a2a;"></div>
<div style="left:1652px;top:1155px;width:1px;height:27px;background:#2a2a2a;"></div>
<div style="left:1768px;top:1155px;width:1px;height:27px;background:#2a2a2a;"></div>
<div style="left:261px;top:1181px;width:1px;height:27px;background:#2a2a2a;"></div>
<div style="left:377px;top:1181px;width:1px;height:27px;background:#2a2a2a;"></div>
<div style="left:492px;top:1181px;width:1px;height:27px;background:#2a2a2a;"></div>
<div style="left:608px;top:1181px;width:1px;height:27px;background:#2a2a2a;"></div>
<div style="left:724px;top:1181px;width:1px;height:27px;background:#2a2a2a;"></div>
<div style="left:840px;top:1181px;width:1px;height:27px;background:#2a2a2a;"></div>
<div style="left:956px;top:1181px;width:1px;height:27px;background:#2a2a2a;"></div>
<div style="left:1072px;top:1181px;width:1px;height:27px;background:#2a2a2a;"></div>
<div style="left:1188px;top:1181px;width:1px;height:27px;background:#2a2a2a;"></div>
<div style="left:1304px;top:1181px;width:1px;height:27px;background:#2a2a2a;"></div>
<div style="left:1420px;top:1181px;width:1px;height:27px;background:#2a2a2a;"></div>
<div style="left:1536px;top:1181px;width:1px;height:27px;background:#2a2a2a;"></div>
<div style="left:1652px;top:1181px;width:1px;height:27px;background:#2a2a2a;"></div>
<div style="left:1768px;top:1181px;width:1px;height:27px;background:#2a2a2a;"></div>
<div style="left:609px;top:691px;width:0;height:0;border-top:7px solid #008000;border-right:8px solid transparent"></div>
<div style="left:609px;top:717px;width:0;height:0;border-top:7px solid #008000;border-right:8px solid transparent"></div>
<div style="left:609px;top:742px;width:0;height:0;border-top:7px solid #008000;border-right:8px solid transparent"></div>
<div style="left:957px;top:691px;width:0;height:0;border-top:7px solid #008000;border-right:8px solid transparent"></div>
<div style="left:957px;top:717px;width:0;height:0;border-top:7px solid #008000;border-right:8px solid transparent"></div>
<div style="left:957px;top:742px;width:0;height:0;border-top:7px solid #008000;border-right:8px solid transparent"></div>
<div style="left:1305px;top:691px;width:0;height:0;border-top:7px solid #008000;border-right:8px solid transparent"></div>
<div style="left:1305px;top:717px;width:0;height:0;border-top:7px solid #008000;border-right:8px solid transparent"></div>
<div style="left:1305px;top:742px;width:0;height:0;border-top:7px solid #008000;border-right:8px solid transparent"></div>
<div style="left:0px;top:0px;width:1920px;height:23px;background:#efefef;"></div>
<div style="left:0px;top:23px;width:19px;height:1400px;background:#efefef;"></div>
<div style="left:0px;top:23px;width:19px;height:1px;background:#dcdcdc;"></div>
<div style="left:19px;top:23px;width:1901px;height:1px;background:#b4b4b4;"></div>
<div style="left:19px;top:0px;width:1px;height:23px;background:#dadada;"></div>
<div style="left:19px;top:23px;width:1px;height:1400px;background:#b9b9b9;"></div>
<div style="left:20px;top:24px;width:2px;height:2px;background:#333;"></div>
<div style="left:0;top:0;width:0;height:0;border-bottom:19px solid #dcdcdc;border-left:16px solid transparent;left:0;top:1px"></div>
<div style="left:261px;top:0px;width:1px;height:23px;background:#dadada;"></div>
<div class="t" style="left:-359.50px;width:1000px;text-align:center;transform-origin:50% 0;top:2.61px;font-family:'Liberation Sans', sans-serif;font-weight:normal;font-size:17px;line-height:17px;color:#444;">A</div>
<div style="left:377px;top:0px;width:1px;height:23px;background:#dadada;"></div>
<div class="t" style="left:-180.50px;width:1000px;text-align:center;transform-origin:50% 0;top:2.61px;font-family:'Liberation Sans', sans-serif;font-weight:normal;font-size:17px;line-height:17px;color:#444;">B</div>
<div style="left:492px;top:0px;width:1px;height:23px;background:#dadada;"></div>
<div class="t" style="left:-65.00px;width:1000px;text-align:center;transform-origin:50% 0;top:2.61px;font-family:'Liberation Sans', sans-serif;font-weight:normal;font-size:17px;line-height:17px;color:#444;">C</div>
<div style="left:608px;top:0px;width:1px;height:23px;background:#dadada;"></div>
<div class="t" style="left:50.50px;width:1000px;text-align:center;transform-origin:50% 0;top:2.61px;font-family:'Liberation Sans', sans-serif;font-weight:normal;font-size:17px;line-height:17px;color:#444;">D</div>
<div style="left:724px;top:0px;width:1px;height:23px;background:#dadada;"></div>
<div class="t" style="left:166.50px;width:1000px;text-align:center;transform-origin:50% 0;top:2.61px;font-family:'Liberation Sans', sans-serif;font-weight:normal;font-size:17px;line-height:17px;color:#444;">E</div>
<div style="left:840px;top:0px;width:1px;height:23px;background:#dadada;"></div>
<div class="t" style="left:282.50px;width:1000px;text-align:center;transform-origin:50% 0;top:2.61px;font-family:'Liberation Sans', sans-serif;font-weight:normal;font-size:17px;line-height:17px;color:#444;">F</div>
<div style="left:956px;top:0px;width:1px;height:23px;background:#dadada;"></div>
<div class="t" style="left:398.50px;width:1000px;text-align:center;transform-origin:50% 0;top:2.61px;font-family:'Liberation Sans', sans-serif;font-weight:normal;font-size:17px;line-height:17px;color:#444;">G</div>
<div style="left:1072px;top:0px;width:1px;height:23px;background:#dadada;"></div>
<div class="t" style="left:514.50px;width:1000px;text-align:center;transform-origin:50% 0;top:2.61px;font-family:'Liberation Sans', sans-serif;font-weight:normal;font-size:17px;line-height:17px;color:#444;">H</div>
<div style="left:1188px;top:0px;width:1px;height:23px;background:#dadada;"></div>
<div class="t" style="left:630.50px;width:1000px;text-align:center;transform-origin:50% 0;top:2.61px;font-family:'Liberation Sans', sans-serif;font-weight:normal;font-size:17px;line-height:17px;color:#444;">I</div>
<div style="left:1304px;top:0px;width:1px;height:23px;background:#dadada;"></div>
<div class="t" style="left:746.50px;width:1000px;text-align:center;transform-origin:50% 0;top:2.61px;font-family:'Liberation Sans', sans-serif;font-weight:normal;font-size:17px;line-height:17px;color:#444;">J</div>
<div style="left:1420px;top:0px;width:1px;height:23px;background:#dadada;"></div>
<div class="t" style="left:862.50px;width:1000px;text-align:center;transform-origin:50% 0;top:2.61px;font-family:'Liberation Sans', sans-serif;font-weight:normal;font-size:17px;line-height:17px;color:#444;">K</div>
<div style="left:1536px;top:0px;width:1px;height:23px;background:#dadada;"></div>
<div class="t" style="left:978.50px;width:1000px;text-align:center;transform-origin:50% 0;top:2.61px;font-family:'Liberation Sans', sans-serif;font-weight:normal;font-size:17px;line-height:17px;color:#444;">L</div>
<div style="left:1652px;top:0px;width:1px;height:23px;background:#dadada;"></div>
<div class="t" style="left:1094.50px;width:1000px;text-align:center;transform-origin:50% 0;top:2.61px;font-family:'Liberation Sans', sans-serif;font-weight:normal;font-size:17px;line-height:17px;color:#444;">M</div>
<div style="left:1768px;top:0px;width:1px;height:23px;background:#dadada;"></div>
<div class="t" style="left:1210.50px;width:1000px;text-align:center;transform-origin:50% 0;top:2.61px;font-family:'Liberation Sans', sans-serif;font-weight:normal;font-size:17px;line-height:17px;color:#444;">N</div>
<div style="left:1852px;top:0px;width:1px;height:23px;background:#dadada;"></div>
<div class="t" style="left:1310.50px;width:1000px;text-align:center;transform-origin:50% 0;top:2.61px;font-family:'Liberation Sans', sans-serif;font-weight:normal;font-size:17px;line-height:17px;color:#444;">O</div>
<div class="t" style="left:1394.50px;width:1000px;text-align:center;transform-origin:50% 0;top:2.61px;font-family:'Liberation Sans', sans-serif;font-weight:normal;font-size:17px;line-height:17px;color:#444;">P</div>
<div style="left:0px;top:59px;width:19px;height:1px;background:#dcdcdc;"></div>
<div style="left:0px;top:24px;width:19px;height:35px;overflow:hidden"><div class="t" style="left:-498.30px;width:1000px;text-align:center;transform-origin:50% 0;top:14.61px;font-family:'Liberation Sans', sans-serif;font-weight:normal;font-size:17px;line-height:17px;color:#444;">1</div></div>
<div style="left:0px;top:85px;width:19px;height:1px;background:#dcdcdc;"></div>
<div style="left:0px;top:60px;width:19px;height:25px;overflow:hidden"><div class="t" style="left:-498.30px;width:1000px;text-align:center;transform-origin:50% 0;top:4.61px;font-family:'Liberation Sans', sans-serif;font-weight:normal;font-size:17px;line-height:17px;color:#444;">2</div></div>
<div style="left:0px;top:116px;width:19px;height:1px;background:#dcdcdc;"></div>
<div style="left:0px;top:86px;width:19px;height:30px;overflow:hidden"><div class="t" style="left:-498.30px;width:1000px;text-align:center;transform-origin:50% 0;top:9.61px;font-family:'Liberation Sans', sans-serif;font-weight:normal;font-size:17px;line-height:17px;color:#444;">3</div></div>
<div style="left:0px;top:142px;width:19px;height:1px;background:#dcdcdc;"></div>
<div style="left:0px;top:117px;width:19px;height:25px;overflow:hidden"><div class="t" style="left:-498.30px;width:1000px;text-align:center;transform-origin:50% 0;top:4.61px;font-family:'Liberation Sans', sans-serif;font-weight:normal;font-size:17px;line-height:17px;color:#444;">4</div></div>
<div style="left:0px;top:168px;width:19px;height:1px;background:#dcdcdc;"></div>
<div style="left:0px;top:143px;width:19px;height:25px;overflow:hidden"><div class="t" style="left:-498.30px;width:1000px;text-align:center;transform-origin:50% 0;top:4.61px;font-family:'Liberation Sans', sans-serif;font-weight:normal;font-size:17px;line-height:17px;color:#444;">5</div></div>
<div style="left:0px;top:193px;width:19px;height:1px;background:#dcdcdc;"></div>
<div style="left:0px;top:169px;width:19px;height:24px;overflow:hidden"><div class="t" style="left:-498.30px;width:1000px;text-align:center;transform-origin:50% 0;top:3.61px;font-family:'Liberation Sans', sans-serif;font-weight:normal;font-size:17px;line-height:17px;color:#444;">6</div></div>
<div style="left:0px;top:219px;width:19px;height:1px;background:#dcdcdc;"></div>
<div style="left:0px;top:194px;width:19px;height:25px;overflow:hidden"><div class="t" style="left:-498.30px;width:1000px;text-align:center;transform-origin:50% 0;top:4.61px;font-family:'Liberation Sans', sans-serif;font-weight:normal;font-size:17px;line-height:17px;color:#444;">7</div></div>
<div style="left:0px;top:245px;width:19px;height:1px;background:#dcdcdc;"></div>
<div style="left:0px;top:220px;width:19px;height:25px;overflow:hidden"><div class="t" style="left:-498.30px;width:1000px;text-align:center;transform-origin:50% 0;top:4.61px;font-family:'Liberation Sans', sans-serif;font-weight:normal;font-size:17px;line-height:17px;color:#444;">8</div></div>
<div style="left:0px;top:271px;width:19px;height:1px;background:#dcdcdc;"></div>
<div style="left:0px;top:246px;width:19px;height:25px;overflow:hidden"><div class="t" style="left:-498.30px;width:1000px;text-align:center;transform-origin:50% 0;top:4.61px;font-family:'Liberation Sans', sans-serif;font-weight:normal;font-size:17px;line-height:17px;color:#444;">9</div></div>
<div style="left:0px;top:297px;width:19px;height:1px;background:#dcdcdc;"></div>
<div style="left:0px;top:272px;width:19px;height:25px;overflow:hidden"><div class="t" style="left:1.30px;transform-origin:0 0;top:4.61px;font-family:'Liberation Sans', sans-serif;font-weight:normal;font-size:17px;line-height:17px;color:#444;">0</div></div>
<div style="left:0px;top:323px;width:19px;height:1px;background:#dcdcdc;"></div>
<div style="left:0px;top:298px;width:19px;height:25px;overflow:hidden"><div class="t" style="left:1.30px;transform-origin:0 0;top:4.61px;font-family:'Liberation Sans', sans-serif;font-weight:normal;font-size:17px;line-height:17px;color:#444;">1</div></div>
<div style="left:0px;top:349px;width:19px;height:1px;background:#dcdcdc;"></div>
<div style="left:0px;top:324px;width:19px;height:25px;overflow:hidden"><div class="t" style="left:1.30px;transform-origin:0 0;top:4.61px;font-family:'Liberation Sans', sans-serif;font-weight:normal;font-size:17px;line-height:17px;color:#444;">2</div></div>
<div style="left:0px;top:374px;width:19px;height:1px;background:#dcdcdc;"></div>
<div style="left:0px;top:350px;width:19px;height:24px;overflow:hidden"><div class="t" style="left:1.30px;transform-origin:0 0;top:3.61px;font-family:'Liberation Sans', sans-serif;font-weight:normal;font-size:17px;line-height:17px;color:#444;">3</div></div>
<div style="left:0px;top:400px;width:19px;height:1px;background:#dcdcdc;"></div>
<div style="left:0px;top:375px;width:19px;height:25px;overflow:hidden"><div class="t" style="left:1.30px;transform-origin:0 0;top:4.61px;font-family:'Liberation Sans', sans-serif;font-weight:normal;font-size:17px;line-height:17px;color:#444;">4</div></div>
<div style="left:0px;top:426px;width:19px;height:1px;background:#dcdcdc;"></div>
<div style="left:0px;top:401px;width:19px;height:25px;overflow:hidden"><div class="t" style="left:1.30px;transform-origin:0 0;top:4.61px;font-family:'Liberation Sans', sans-serif;font-weight:normal;font-size:17px;line-height:17px;color:#444;">5</div></div>
<div style="left:0px;top:457px;width:19px;height:1px;background:#dcdcdc;"></div>
<div style="left:0px;top:427px;width:19px;height:30px;overflow:hidden"><div class="t" style="left:1.30px;transform-origin:0 0;top:9.61px;font-family:'Liberation Sans', sans-serif;font-weight:normal;font-size:17px;line-height:17px;color:#444;">6</div></div>
<div style="left:0px;top:483px;width:19px;height:1px;background:#dcdcdc;"></div>
<div style="left:0px;top:458px;width:19px;height:25px;overflow:hidden"><div class="t" style="left:1.30px;transform-origin:0 0;top:4.61px;font-family:'Liberation Sans', sans-serif;font-weight:normal;font-size:17px;line-height:17px;color:#444;">7</div></div>
<div style="left:0px;top:509px;width:19px;height:1px;background:#dcdcdc;"></div>
<div style="left:0px;top:484px;width:19px;height:25px;overflow:hidden"><div class="t" style="left:1.30px;transform-origin:0 0;top:4.61px;font-family:'Liberation Sans', sans-serif;font-weight:normal;font-size:17px;line-height:17px;color:#444;">8</div></div>
<div style="left:0px;top:535px;width:19px;height:1px;background:#dcdcdc;"></div>
<div style="left:0px;top:510px;width:19px;height:25px;overflow:hidden"><div class="t" style="left:1.30px;transform-origin:0 0;top:4.61px;font-family:'Liberation Sans', sans-serif;font-weight:normal;font-size:17px;line-height:17px;color:#444;">9</div></div>
<div style="left:0px;top:560px;width:19px;height:1px;background:#dcdcdc;"></div>
<div style="left:0px;top:536px;width:19px;height:24px;overflow:hidden"><div class="t" style="left:1.30px;transform-origin:0 0;top:3.61px;font-family:'Liberation Sans', sans-serif;font-weight:normal;font-size:17px;line-height:17px;color:#444;">0</div></div>
<div style="left:0px;top:586px;width:19px;height:1px;background:#dcdcdc;"></div>
<div style="left:0px;top:561px;width:19px;height:25px;overflow:hidden"><div class="t" style="left:1.30px;transform-origin:0 0;top:4.61px;font-family:'Liberation Sans', sans-serif;font-weight:normal;font-size:17px;line-height:17px;color:#444;">1</div></div>
<div style="left:0px;top:612px;width:19px;height:1px;background:#dcdcdc;"></div>
<div style="left:0px;top:587px;width:19px;height:25px;overflow:hidden"><div class="t" style="left:1.30px;transform-origin:0 0;top:4.61px;font-family:'Liberation Sans', sans-serif;font-weight:normal;font-size:17px;line-height:17px;color:#444;">2</div></div>
<div style="left:0px;top:638px;width:19px;height:1px;background:#dcdcdc;"></div>
<div style="left:0px;top:613px;width:19px;height:25px;overflow:hidden"><div class="t" style="left:1.30px;transform-origin:0 0;top:4.61px;font-family:'Liberation Sans', sans-serif;font-weight:normal;font-size:17px;line-height:17px;color:#444;">3</div></div>
<div style="left:0px;top:664px;width:19px;height:1px;background:#dcdcdc;"></div>
<div style="left:0px;top:639px;width:19px;height:25px;overflow:hidden"><div class="t" style="left:1.30px;transform-origin:0 0;top:4.61px;font-family:'Liberation Sans', sans-serif;font-weight:normal;font-size:17px;line-height:17px;color:#444;">4</div></div>
<div style="left:0px;top:690px;width:19px;height:1px;background:#dcdcdc;"></div>
<div style="left:0px;top:665px;width:19px;height:25px;overflow:hidden"><div class="t" style="left:1.30px;transform-origin:0 0;top:4.61px;font-family:'Liberation Sans', sans-serif;font-weight:normal;font-size:17px;line-height:17px;color:#444;">5</div></div>
<div style="left:0px;top:716px;width:19px;height:1px;background:#dcdcdc;"></div>
<div style="left:0px;top:691px;width:19px;height:25px;overflow:hidden"><div class="t" style="left:1.30px;transform-origin:0 0;top:4.61px;font-family:'Liberation Sans', sans-serif;font-weight:normal;font-size:17px;line-height:17px;color:#444;">6</div></div>
<div style="left:0px;top:741px;width:19px;height:1px;background:#dcdcdc;"></div>
<div style="left:0px;top:717px;width:19px;height:24px;overflow:hidden"><div class="t" style="left:1.30px;transform-origin:0 0;top:3.61px;font-family:'Liberation Sans', sans-serif;font-weight:normal;font-size:17px;line-height:17px;color:#444;">7</div></div>
<div style="left:0px;top:767px;width:19px;height:1px;background:#dcdcdc;"></div>
<div style="left:0px;top:742px;width:19px;height:25px;overflow:hidden"><div class="t" style="left:1.30px;transform-origin:0 0;top:4.61px;font-family:'Liberation Sans', sans-serif;font-weight:normal;font-size:17px;line-height:17px;color:#444;">8</div></div>
<div style="left:0px;top:793px;width:19px;height:1px;background:#dcdcdc;"></div>
<div style="left:0px;top:768px;width:19px;height:25px;overflow:hidden"><div class="t" style="left:1.30px;transform-origin:0 0;top:4.61px;font-family:'Liberation Sans', sans-serif;font-weight:normal;font-size:17px;line-height:17px;color:#444;">9</div></div>
<div style="left:0px;top:819px;width:19px;height:1px;background:#dcdcdc;"></div>
<div style="left:0px;top:794px;width:19px;height:25px;overflow:hidden"><div class="t" style="left:1.30px;transform-origin:0 0;top:4.61px;font-family:'Liberation Sans', sans-serif;font-weight:normal;font-size:17px;line-height:17px;color:#444;">0</div></div>
<div style="left:0px;top:845px;width:19px;height:1px;background:#dcdcdc;"></div>
<div style="left:0px;top:820px;width:19px;height:25px;overflow:hidden"><div class="t" style="left:1.30px;transform-origin:0 0;top:4.61px;font-family:'Liberation Sans', sans-serif;font-weight:normal;font-size:17px;line-height:17px;color:#444;">1</div></div>
<div style="left:0px;top:871px;width:19px;height:1px;background:#dcdcdc;"></div>
<div style="left:0px;top:846px;width:19px;height:25px;overflow:hidden"><div class="t" style="left:1.30px;transform-origin:0 0;top:4.61px;font-family:'Liberation Sans', sans-serif;font-weight:normal;font-size:17px;line-height:17px;color:#444;">2</div></div>
<div style="left:0px;top:897px;width:19px;height:1px;background:#dcdcdc;"></div>
<div style="left:0px;top:872px;width:19px;height:25px;overflow:hidden"><div class="t" style="left:1.30px;transform-origin:0 0;top:4.61px;font-family:'Liberation Sans', sans-serif;font-weight:normal;font-size:17px;line-height:17px;color:#444;">3</div></div>
<div style="left:0px;top:922px;width:19px;height:1px;background:#dcdcdc;"></div>
<div style="left:0px;top:898px;width:19px;height:24px;overflow:hidden"><div class="t" style="left:1.30px;transform-origin:0 0;top:3.61px;font-family:'Liberation Sans', sans-serif;font-weight:normal;font-size:17px;line-height:17px;color:#444;">4</div></div>
<div style="left:0px;top:948px;width:19px;height:1px;background:#dcdcdc;"></div>
<div style="left:0px;top:923px;width:19px;height:25px;overflow:hidden"><div class="t" style="left:1.30px;transform-origin:0 0;top:4.61px;font-family:'Liberation Sans', sans-serif;font-weight:normal;font-size:17px;line-height:17px;color:#444;">5</div></div>
<div style="left:0px;top:974px;width:19px;height:1px;background:#dcdcdc;"></div>
<div style="left:0px;top:949px;width:19px;height:25px;overflow:hidden"><div class="t" style="left:1.30px;transform-origin:0 0;top:4.61px;font-family:'Liberation Sans', sans-serif;font-weight:normal;font-size:17px;line-height:17px;color:#444;">6</div></div>
<div style="left:0px;top:1000px;width:19px;height:1px;background:#dcdcdc;"></div>
<div style="left:0px;top:975px;width:19px;height:25px;overflow:hidden"><div class="t" style="left:1.30px;transform-origin:0 0;top:4.61px;font-family:'Liberation Sans', sans-serif;font-weight:normal;font-size:17px;line-height:17px;color:#444;">7</div></div>
<div style="left:0px;top:1026px;width:19px;height:1px;background:#dcdcdc;"></div>
<div style="left:0px;top:1001px;width:19px;height:25px;overflow:hidden"><div class="t" style="left:1.30px;transform-origin:0 0;top:4.61px;font-family:'Liberation Sans', sans-serif;font-weight:normal;font-size:17px;line-height:17px;color:#444;">8</div></div>
<div style="left:0px;top:1052px;width:19px;height:1px;background:#dcdcdc;"></div>
<div style="left:0px;top:1027px;width:19px;height:25px;overflow:hidden"><div class="t" style="left:1.30px;transform-origin:0 0;top:4.61px;font-family:'Liberation Sans', sans-serif;font-weight:normal;font-size:17px;line-height:17px;color:#444;">9</div></div>
<div style="left:0px;top:1078px;width:19px;height:1px;background:#dcdcdc;"></div>
<div style="left:0px;top:1053px;width:19px;height:25px;overflow:hidden"><div class="t" style="left:1.30px;transform-origin:0 0;top:4.61px;font-family:'Liberation Sans', sans-serif;font-weight:normal;font-size:17px;line-height:17px;color:#444;">0</div></div>
<div style="left:0px;top:1104px;width:19px;height:1px;background:#dcdcdc;"></div>
<div style="left:0px;top:1079px;width:19px;height:25px;overflow:hidden"><div class="t" style="left:1.30px;transform-origin:0 0;top:4.61px;font-family:'Liberation Sans', sans-serif;font-weight:normal;font-size:17px;line-height:17px;color:#444;">1</div></div>
<div style="left:0px;top:1129px;width:19px;height:1px;background:#dcdcdc;"></div>
<div style="left:0px;top:1105px;width:19px;height:24px;overflow:hidden"><div class="t" style="left:1.30px;transform-origin:0 0;top:3.61px;font-family:'Liberation Sans', sans-serif;font-weight:normal;font-size:17px;line-height:17px;color:#444;">2</div></div>
<div style="left:0px;top:1155px;width:19px;height:1px;background:#dcdcdc;"></div>
<div style="left:0px;top:1130px;width:19px;height:25px;overflow:hidden"><div class="t" style="left:1.30px;transform-origin:0 0;top:4.61px;font-family:'Liberation Sans', sans-serif;font-weight:normal;font-size:17px;line-height:17px;color:#444;">3</div></div>
<div style="left:0px;top:1181px;width:19px;height:1px;background:#dcdcdc;"></div>
<div style="left:0px;top:1156px;width:19px;height:25px;overflow:hidden"><div class="t" style="left:1.30px;transform-origin:0 0;top:4.61px;font-family:'Liberation Sans', sans-serif;font-weight:normal;font-size:17px;line-height:17px;color:#444;">4</div></div>
<div style="left:0px;top:1207px;width:19px;height:1px;background:#dcdcdc;"></div>
<div style="left:0px;top:1182px;width:19px;height:25px;overflow:hidden"><div class="t" style="left:1.30px;transform-origin:0 0;top:4.61px;font-family:'Liberation Sans', sans-serif;font-weight:normal;font-size:17px;line-height:17px;color:#444;">5</div></div>
<div style="left:0px;top:1233px;width:19px;height:1px;background:#dcdcdc;"></div>
<div style="left:0px;top:1208px;width:19px;height:25px;overflow:hidden"><div class="t" style="left:1.30px;transform-origin:0 0;top:4.61px;font-family:'Liberation Sans', sans-serif;font-weight:normal;font-size:17px;line-height:17px;color:#444;">6</div></div>
<div style="left:0px;top:1259px;width:19px;height:1px;background:#dcdcdc;"></div>
<div style="left:0px;top:1234px;width:19px;height:25px;overflow:hidden"><div class="t" style="left:1.30px;transform-origin:0 0;top:4.61px;font-family:'Liberation Sans', sans-serif;font-weight:normal;font-size:17px;line-height:17px;color:#444;">7</div></div>
<div style="left:0px;top:1285px;width:19px;height:1px;background:#dcdcdc;"></div>
<div style="left:0px;top:1260px;width:19px;height:25px;overflow:hidden"><div class="t" style="left:1.30px;transform-origin:0 0;top:4.61px;font-family:'Liberation Sans', sans-serif;font-weight:normal;font-size:17px;line-height:17px;color:#444;">8</div></div>
<div style="left:0px;top:1310px;width:19px;height:1px;background:#dcdcdc;"></div>
<div style="left:0px;top:1286px;width:19px;height:24px;overflow:hidden"><div class="t" style="left:1.30px;transform-origin:0 0;top:3.61px;font-family:'Liberation Sans', sans-serif;font-weight:normal;font-size:17px;line-height:17px;color:#444;">9</div></div>
<div style="left:0px;top:1336px;width:19px;height:1px;background:#dcdcdc;"></div>
<div style="left:0px;top:1311px;width:19px;height:25px;overflow:hidden"><div class="t" style="left:1.30px;transform-origin:0 0;top:4.61px;font-family:'Liberation Sans', sans-serif;font-weight:normal;font-size:17px;line-height:17px;color:#444;">0</div></div>
<div style="left:0px;top:1362px;width:19px;height:1px;background:#dcdcdc;"></div>
<div style="left:0px;top:1337px;width:19px;height:25px;overflow:hidden"><div class="t" style="left:1.30px;transform-origin:0 0;top:4.61px;font-family:'Liberation Sans', sans-serif;font-weight:normal;font-size:17px;line-height:17px;color:#444;">1</div></div>
<div style="left:0px;top:1388px;width:19px;height:1px;background:#dcdcdc;"></div>
<div style="left:0px;top:1363px;width:19px;height:25px;overflow:hidden"><div class="t" style="left:1.30px;transform-origin:0 0;top:4.61px;font-family:'Liberation Sans', sans-serif;font-weight:normal;font-size:17px;line-height:17px;color:#444;">2</div></div>
<div style="left:0px;top:1414px;width:19px;height:1px;background:#dcdcdc;"></div>
<div style="left:0px;top:1389px;width:19px;height:25px;overflow:hidden"><div class="t" style="left:1.30px;transform-origin:0 0;top:4.61px;font-family:'Liberation Sans', sans-serif;font-weight:normal;font-size:17px;line-height:17px;color:#444;">3</div></div>
<div style="left:0px;top:1415px;width:19px;height:25px;overflow:hidden"><div class="t" style="left:1.30px;transform-origin:0 0;top:4.61px;font-family:'Liberation Sans', sans-serif;font-weight:normal;font-size:17px;line-height:17px;color:#444;">4</div></div>
<div style="left:0px;top:1441px;width:19px;height:25px;overflow:hidden"><div class="t" style="left:1.30px;transform-origin:0 0;top:4.61px;font-family:'Liberation Sans', sans-serif;font-weight:normal;font-size:17px;line-height:17px;color:#444;">5</div></div>
<div class="t" style="left:25.00px;transform-origin:0 0;top:28.21px;font-family:'Liberation Serif', serif;font-weight:bold;font-size:29px;line-height:29px;color:#000;transform:scaleX(1.0260);">SaaS Growth Stage Startup - 12 Month Budget Model</div>
<div class="t" style="left:24.50px;transform-origin:0 0;top:89.26px;font-family:'Liberation Serif', serif;font-weight:bold;font-size:25px;line-height:25px;color:#fff;transform:scaleX(0.9120);">KEY ASSUMPTIONS</div>
<div style="left:20px;top:117px;width:241px;height:25px;overflow:hidden"><div class="t" style="left:3.80px;transform-origin:0 0;top:5.04px;font-family:'Liberation Sans', sans-serif;font-weight:normal;font-size:17.2px;line-height:17.2px;color:#2b2b2b;transform:scaleX(1.0402);">Starting Customer Base:</div></div>
<div class="t" style="right:1546.80px;transform-origin:100% 0;top:121.31px;font-family:'Liberation Sans', sans-serif;font-weight:normal;font-size:18.3px;line-height:18.3px;color:#0000ff;transform:scaleX(1.0800);">200</div>
<div class="t" style="left:380.40px;transform-origin:0 0;top:122.04px;font-family:'Liberation Sans', sans-serif;font-weight:normal;font-size:17.2px;line-height:17.2px;color:#2b2b2b;transform:scaleX(1.0602);">customers</div>
<div style="left:20px;top:143px;width:241px;height:25px;overflow:hidden"><div class="t" style="left:3.00px;transform-origin:0 0;top:5.04px;font-family:'Liberation Sans', sans-serif;font-weight:normal;font-size:17.2px;line-height:17.2px;color:#2b2b2b;transform:scaleX(1.0600);">Monthly Customer Growth Rate:</div></div>
<div class="t" style="right:1546.80px;transform-origin:100% 0;top:147.31px;font-family:'Liberation Sans', sans-serif;font-weight:normal;font-size:18.3px;line-height:18.3px;color:#0000ff;transform:scaleX(1.0800);">15.0%</div>
<div class="t" style="left:381.00px;transform-origin:0 0;top:148.04px;font-family:'Liberation Sans', sans-serif;font-weight:normal;font-size:17.2px;line-height:17.2px;color:#2b2b2b;transform:scaleX(1.0600);">%</div>
<div style="left:20px;top:169px;width:241px;height:24px;overflow:hidden"><div class="t" style="left:2.76px;transform-origin:0 0;top:4.04px;font-family:'Liberation Sans', sans-serif;font-weight:normal;font-size:17.2px;line-height:17.2px;color:#2b2b2b;transform:scaleX(1.0816);">Monthly Churn Rate:</div></div>
<div class="t" style="right:1546.80px;transform-origin:100% 0;top:172.31px;font-family:'Liberation Sans', sans-serif;font-weight:normal;font-size:18.3px;line-height:18.3px;color:#0000ff;transform:scaleX(1.0800);">5.0%</div>
<div class="t" style="left:381.00px;transform-origin:0 0;top:173.04px;font-family:'Liberation Sans', sans-serif;font-weight:normal;font-size:17.2px;line-height:17.2px;color:#2b2b2b;transform:scaleX(1.0600);">%</div>
<div style="left:20px;top:194px;width:241px;height:25px;overflow:hidden"><div class="t" style="left:2.76px;transform-origin:0 0;top:5.04px;font-family:'Liberation Sans', sans-serif;font-weight:normal;font-size:17.2px;line-height:17.2px;color:#2b2b2b;transform:scaleX(1.0907);">Monthly Subscription Price:</div></div>
<div class="t" style="right:1546.80px;transform-origin:100% 0;top:198.31px;font-family:'Liberation Sans', sans-serif;font-weight:normal;font-size:18.3px;line-height:18.3px;color:#0000ff;transform:scaleX(1.0800);">$500</div>
<div class="t" style="left:381.00px;transform-origin:0 0;top:199.04px;font-family:'Liberation Sans', sans-serif;font-weight:normal;font-size:17.2px;line-height:17.2px;color:#2b2b2b;transform:scaleX(1.0600);">$</div>
<div style="left:20px;top:220px;width:241px;height:25px;overflow:hidden"><div class="t" style="left:3.80px;transform-origin:0 0;top:5.04px;font-family:'Liberation Sans', sans-serif;font-weight:normal;font-size:17.2px;line-height:17.2px;color:#2b2b2b;transform:scaleX(1.0715);">Starting Headcount:</div></div>
<div class="t" style="right:1546.80px;transform-origin:100% 0;top:224.31px;font-family:'Liberation Sans', sans-serif;font-weight:normal;font-size:18.3px;line-height:18.3px;color:#0000ff;transform:scaleX(1.0800);">15</div>
<div class="t" style="left:380.40px;transform-origin:0 0;top:225.04px;font-family:'Liberation Sans', sans-serif;font-weight:normal;font-size:17.2px;line-height:17.2px;color:#2b2b2b;transform:scaleX(1.0522);">employees</div>
<div style="left:20px;top:246px;width:241px;height:25px;overflow:hidden"><div class="t" style="left:2.78px;transform-origin:0 0;top:5.04px;font-family:'Liberation Sans', sans-serif;font-weight:normal;font-size:17.2px;line-height:17.2px;color:#2b2b2b;transform:scaleX(1.0678);">New Hires per Quarter:</div></div>
<div class="t" style="right:1546.80px;transform-origin:100% 0;top:250.31px;font-family:'Liberation Sans', sans-serif;font-weight:normal;font-size:18.3px;line-height:18.3px;color:#0000ff;transform:scaleX(1.0800);">3</div>
<div class="t" style="left:380.40px;transform-origin:0 0;top:251.04px;font-family:'Liberation Sans', sans-serif;font-weight:normal;font-size:17.2px;line-height:17.2px;color:#2b2b2b;transform:scaleX(1.0522);">employees</div>
<div style="left:20px;top:272px;width:241px;height:25px;overflow:hidden"><div class="t" style="left:3.00px;transform-origin:0 0;top:5.04px;font-family:'Liberation Sans', sans-serif;font-weight:normal;font-size:17.2px;line-height:17.2px;color:#2b2b2b;transform:scaleX(1.0600);">Avg Annual Cost per Employee:</div></div>
<div class="t" style="right:1546.80px;transform-origin:100% 0;top:276.31px;font-family:'Liberation Sans', sans-serif;font-weight:normal;font-size:18.3px;line-height:18.3px;color:#0000ff;transform:scaleX(1.0800);">$120,000</div>
<div class="t" style="left:381.00px;transform-origin:0 0;top:277.04px;font-family:'Liberation Sans', sans-serif;font-weight:normal;font-size:17.2px;line-height:17.2px;color:#2b2b2b;transform:scaleX(1.0600);">$</div>
<div style="left:20px;top:298px;width:241px;height:25px;overflow:hidden"><div class="t" style="left:3.80px;transform-origin:0 0;top:5.04px;font-family:'Liberation Sans', sans-serif;font-weight:normal;font-size:17.2px;line-height:17.2px;color:#2b2b2b;transform:scaleX(1.1169);">Starting Monthly Marketing:</div></div>
<div class="t" style="right:1546.80px;transform-origin:100% 0;top:302.31px;font-family:'Liberation Sans', sans-serif;font-weight:normal;font-size:18.3px;line-height:18.3px;color:#0000ff;transform:scaleX(1.0800);">$20,000</div>
<div class="t" style="left:381.00px;transform-origin:0 0;top:303.04px;font-family:'Liberation Sans', sans-serif;font-weight:normal;font-size:17.2px;line-height:17.2px;color:#2b2b2b;transform:scaleX(1.0600);">$</div>
<div style="left:20px;top:324px;width:241px;height:25px;overflow:hidden"><div class="t" style="left:3.20px;transform-origin:0 0;top:5.04px;font-family:'Liberation Sans', sans-serif;font-weight:normal;font-size:17.2px;line-height:17.2px;color:#2b2b2b;transform:scaleX(1.0800);">Marketing Growth per Quarter:</div></div>
<div class="t" style="right:1546.80px;transform-origin:100% 0;top:328.31px;font-family:'Liberation Sans', sans-serif;font-weight:normal;font-size:18.3px;line-height:18.3px;color:#0000ff;transform:scaleX(1.0800);">10.0%</div>
<div class="t" style="left:381.00px;transform-origin:0 0;top:329.04px;font-family:'Liberation Sans', sans-serif;font-weight:normal;font-size:17.2px;line-height:17.2px;color:#2b2b2b;transform:scaleX(1.0600);">%</div>
<div style="left:20px;top:350px;width:241px;height:24px;overflow:hidden"><div class="t" style="left:2.77px;transform-origin:0 0;top:4.04px;font-family:'Liberation Sans', sans-serif;font-weight:normal;font-size:17.2px;line-height:17.2px;color:#2b2b2b;transform:scaleX(1.0767);">Monthly Office Lease:</div></div>
<div class="t" style="right:1546.80px;transform-origin:100% 0;top:353.31px;font-family:'Liberation Sans', sans-serif;font-weight:normal;font-size:18.3px;line-height:18.3px;color:#0000ff;transform:scaleX(1.0800);">$8,000</div>
<div class="t" style="left:381.00px;transform-origin:0 0;top:354.04px;font-family:'Liberation Sans', sans-serif;font-weight:normal;font-size:17.2px;line-height:17.2px;color:#2b2b2b;transform:scaleX(1.0600);">$</div>
<div style="left:20px;top:375px;width:241px;height:25px;overflow:hidden"><div class="t" style="left:3.80px;transform-origin:0 0;top:5.04px;font-family:'Liberation Sans', sans-serif;font-weight:normal;font-size:17.2px;line-height:17.2px;color:#2b2b2b;transform:scaleX(1.0248);">Starting Cash Balance:</div></div>
<div class="t" style="right:1546.80px;transform-origin:100% 0;top:379.31px;font-family:'Liberation Sans', sans-serif;font-weight:normal;font-size:18.3px;line-height:18.3px;color:#0000ff;transform:scaleX(1.0800);">$2,000,000</div>
<div class="t" style="left:381.00px;transform-origin:0 0;top:380.04px;font-family:'Liberation Sans', sans-serif;font-weight:normal;font-size:17.2px;line-height:17.2px;color:#2b2b2b;transform:scaleX(1.0600);">$</div>
<div class="t" style="left:24.50px;transform-origin:0 0;top:429.56px;font-family:'Liberation Serif', serif;font-weight:bold;font-size:25px;line-height:25px;color:#fff;transform:scaleX(0.8980);">MONTHLY MODEL</div>
<div class="t" style="left:-358.89px;width:1000px;text-align:center;transform-origin:50% 0;top:460.98px;font-family:'Liberation Serif', serif;font-weight:bold;font-size:19.6px;line-height:19.6px;color:#fff;transform:scaleX(1.0757);">Metric</div>
<div class="t" style="left:-181.23px;width:1000px;text-align:center;transform-origin:50% 0;top:460.98px;font-family:'Liberation Serif', serif;font-weight:bold;font-size:19.6px;line-height:19.6px;color:#fff;transform:scaleX(0.9590);">Jan</div>
<div class="t" style="left:-64.50px;width:1000px;text-align:center;transform-origin:50% 0;top:460.98px;font-family:'Liberation Serif', serif;font-weight:bold;font-size:19.6px;line-height:19.6px;color:#fff;transform:scaleX(1.0356);">Feb</div>
<div class="t" style="left:50.79px;width:1000px;text-align:center;transform-origin:50% 0;top:460.98px;font-family:'Liberation Serif', serif;font-weight:bold;font-size:19.6px;line-height:19.6px;color:#fff;transform:scaleX(0.9736);">Mar</div>
<div class="t" style="left:167.00px;width:1000px;text-align:center;transform-origin:50% 0;top:460.98px;font-family:'Liberation Serif', serif;font-weight:bold;font-size:19.6px;line-height:19.6px;color:#fff;transform:scaleX(1.0508);">Apr</div>
<div class="t" style="left:282.68px;width:1000px;text-align:center;transform-origin:50% 0;top:460.98px;font-family:'Liberation Serif', serif;font-weight:bold;font-size:19.6px;line-height:19.6px;color:#fff;transform:scaleX(1.0209);">May</div>
<div class="t" style="left:398.45px;width:1000px;text-align:center;transform-origin:50% 0;top:460.98px;font-family:'Liberation Serif', serif;font-weight:bold;font-size:19.6px;line-height:19.6px;color:#fff;transform:scaleX(0.9902);">Jun</div>
<div class="t" style="left:514.85px;width:1000px;text-align:center;transform-origin:50% 0;top:460.98px;font-family:'Liberation Serif', serif;font-weight:bold;font-size:19.6px;line-height:19.6px;color:#fff;transform:scaleX(0.9804);">Jul</div>
<div class="t" style="left:630.51px;width:1000px;text-align:center;transform-origin:50% 0;top:460.98px;font-family:'Liberation Serif', serif;font-weight:bold;font-size:19.6px;line-height:19.6px;color:#fff;transform:scaleX(1.0516);">Aug</div>
<div class="t" style="left:745.98px;width:1000px;text-align:center;transform-origin:50% 0;top:460.98px;font-family:'Liberation Serif', serif;font-weight:bold;font-size:19.6px;line-height:19.6px;color:#fff;transform:scaleX(1.1138);">Sep</div>
<div class="t" style="left:863.20px;width:1000px;text-align:center;transform-origin:50% 0;top:460.98px;font-family:'Liberation Serif', serif;font-weight:bold;font-size:19.6px;line-height:19.6px;color:#fff;transform:scaleX(0.9902);">Oct</div>
<div class="t" style="left:978.30px;width:1000px;text-align:center;transform-origin:50% 0;top:460.98px;font-family:'Liberation Serif', serif;font-weight:bold;font-size:19.6px;line-height:19.6px;color:#fff;transform:scaleX(1.0216);">Nov</div>
<div class="t" style="left:1094.98px;width:1000px;text-align:center;transform-origin:50% 0;top:460.98px;font-family:'Liberation Serif', serif;font-weight:bold;font-size:19.6px;line-height:19.6px;color:#fff;transform:scaleX(1.0944);">Dec</div>
<div class="t" style="left:1210.74px;width:1000px;text-align:center;transform-origin:50% 0;top:460.98px;font-family:'Liberation Serif', serif;font-weight:bold;font-size:19.6px;line-height:19.6px;color:#fff;transform:scaleX(1.1153);">Total</div>
<div class="t" style="left:24.20px;transform-origin:0 0;top:486.98px;font-family:'Liberation Serif', serif;font-weight:bold;font-size:19.6px;line-height:19.6px;color:#fff;transform:scaleX(0.8979);">REVENUE</div>
<div class="t" style="left:24.20px;transform-origin:0 0;top:667.99px;font-family:'Liberation Serif', serif;font-weight:bold;font-size:19.6px;line-height:19.6px;color:#fff;transform:scaleX(0.9431);">HEADCOUNT &amp; PAYROLL</div>
<div class="t" style="left:23.16px;transform-origin:0 0;top:848.99px;font-family:'Liberation Serif', serif;font-weight:bold;font-size:19.6px;line-height:19.6px;color:#fff;transform:scaleX(0.9374);">OPERATING EXPENSES</div>
<div class="t" style="left:24.20px;transform-origin:0 0;top:1055.99px;font-family:'Liberation Serif', serif;font-weight:bold;font-size:19.6px;line-height:19.6px;color:#fff;transform:scaleX(0.9256);">FINANCIAL SUMMARY</div>
<div style="left:20px;top:510px;width:241px;height:25px;overflow:hidden"><div class="t" style="left:2.74px;transform-origin:0 0;top:2.78px;font-family:'Liberation Serif', serif;font-weight:bold;font-size:19.6px;line-height:19.6px;color:#000;transform:scaleX(1.1016);">Starting Customers</div></div>
<div class="t" style="right:1546.50px;transform-origin:100% 0;top:514.99px;font-family:'Liberation Sans', sans-serif;font-weight:normal;font-size:17.5px;line-height:17.5px;color:#2b2b2b;transform:scaleX(1.0800);">200</div>
<div class="t" style="right:1431.50px;transform-origin:100% 0;top:514.99px;font-family:'Liberation Sans', sans-serif;font-weight:normal;font-size:17.5px;line-height:17.5px;color:#2b2b2b;transform:scaleX(1.0800);">220</div>
<div class="t" style="right:1315.50px;transform-origin:100% 0;top:514.99px;font-family:'Liberation Sans', sans-serif;font-weight:normal;font-size:17.5px;line-height:17.5px;color:#2b2b2b;transform:scaleX(1.0800);">242</div>
<div class="t" style="right:1199.50px;transform-origin:100% 0;top:514.99px;font-family:'Liberation Sans', sans-serif;font-weight:normal;font-size:17.5px;line-height:17.5px;color:#2b2b2b;transform:scaleX(1.0800);">266</div>
<div class="t" style="right:1083.50px;transform-origin:100% 0;top:514.99px;font-family:'Liberation Sans', sans-serif;font-weight:normal;font-size:17.5px;line-height:17.5px;color:#2b2b2b;transform:scaleX(1.0800);">293</div>
<div class="t" style="right:967.50px;transform-origin:100% 0;top:514.99px;font-family:'Liberation Sans', sans-serif;font-weight:normal;font-size:17.5px;line-height:17.5px;color:#2b2b2b;transform:scaleX(1.0800);">322</div>
<div class="t" style="right:851.50px;transform-origin:100% 0;top:514.99px;font-family:'Liberation Sans', sans-serif;font-weight:normal;font-size:17.5px;line-height:17.5px;color:#2b2b2b;transform:scaleX(1.0800);">354</div>
<div class="t" style="right:735.50px;transform-origin:100% 0;top:514.99px;font-family:'Liberation Sans', sans-serif;font-weight:normal;font-size:17.5px;line-height:17.5px;color:#2b2b2b;transform:scaleX(1.0800);">390</div>
<div class="t" style="right:619.50px;transform-origin:100% 0;top:514.99px;font-family:'Liberation Sans', sans-serif;font-weight:normal;font-size:17.5px;line-height:17.5px;color:#2b2b2b;transform:scaleX(1.0800);">429</div>
<div class="t" style="right:503.50px;transform-origin:100% 0;top:514.99px;font-family:'Liberation Sans', sans-serif;font-weight:normal;font-size:17.5px;line-height:17.5px;color:#2b2b2b;transform:scaleX(1.0800);">472</div>
<div class="t" style="right:387.50px;transform-origin:100% 0;top:514.99px;font-family:'Liberation Sans', sans-serif;font-weight:normal;font-size:17.5px;line-height:17.5px;color:#2b2b2b;transform:scaleX(1.0800);">519</div>
<div class="t" style="right:271.50px;transform-origin:100% 0;top:514.99px;font-family:'Liberation Sans', sans-serif;font-weight:normal;font-size:17.5px;line-height:17.5px;color:#2b2b2b;transform:scaleX(1.0800);">571</div>
<div style="left:20px;top:536px;width:241px;height:24px;overflow:hidden"><div class="t" style="left:3.75px;transform-origin:0 0;top:1.78px;font-family:'Liberation Serif', serif;font-weight:bold;font-size:19.6px;line-height:19.6px;color:#000;transform:scaleX(1.0928);">New Customers</div></div>
<div class="t" style="right:1546.50px;transform-origin:100% 0;top:539.99px;font-family:'Liberation Sans', sans-serif;font-weight:normal;font-size:17.5px;line-height:17.5px;color:#2b2b2b;transform:scaleX(1.0800);">30</div>
<div class="t" style="right:1431.50px;transform-origin:100% 0;top:539.99px;font-family:'Liberation Sans', sans-serif;font-weight:normal;font-size:17.5px;line-height:17.5px;color:#2b2b2b;transform:scaleX(1.0800);">33</div>
<div class="t" style="right:1315.50px;transform-origin:100% 0;top:539.99px;font-family:'Liberation Sans', sans-serif;font-weight:normal;font-size:17.5px;line-height:17.5px;color:#2b2b2b;transform:scaleX(1.0800);">36</div>
<div class="t" style="right:1199.50px;transform-origin:100% 0;top:539.99px;font-family:'Liberation Sans', sans-serif;font-weight:normal;font-size:17.5px;line-height:17.5px;color:#2b2b2b;transform:scaleX(1.0800);">40</div>
<div class="t" style="right:1083.50px;transform-origin:100% 0;top:539.99px;font-family:'Liberation Sans', sans-serif;font-weight:normal;font-size:17.5px;line-height:17.5px;color:#2b2b2b;transform:scaleX(1.0800);">44</div>
<div class="t" style="right:967.50px;transform-origin:100% 0;top:539.99px;font-family:'Liberation Sans', sans-serif;font-weight:normal;font-size:17.5px;line-height:17.5px;color:#2b2b2b;transform:scaleX(1.0800);">48</div>
<div class="t" style="right:851.50px;transform-origin:100% 0;top:539.99px;font-family:'Liberation Sans', sans-serif;font-weight:normal;font-size:17.5px;line-height:17.5px;color:#2b2b2b;transform:scaleX(1.0800);">53</div>
<div class="t" style="right:735.50px;transform-origin:100% 0;top:539.99px;font-family:'Liberation Sans', sans-serif;font-weight:normal;font-size:17.5px;line-height:17.5px;color:#2b2b2b;transform:scaleX(1.0800);">58</div>
<div class="t" style="right:619.50px;transform-origin:100% 0;top:539.99px;font-family:'Liberation Sans', sans-serif;font-weight:normal;font-size:17.5px;line-height:17.5px;color:#2b2b2b;transform:scaleX(1.0800);">64</div>
<div class="t" style="right:503.50px;transform-origin:100% 0;top:539.99px;font-family:'Liberation Sans', sans-serif;font-weight:normal;font-size:17.5px;line-height:17.5px;color:#2b2b2b;transform:scaleX(1.0800);">71</div>
<div class="t" style="right:387.50px;transform-origin:100% 0;top:539.99px;font-family:'Liberation Sans', sans-serif;font-weight:normal;font-size:17.5px;line-height:17.5px;color:#2b2b2b;transform:scaleX(1.0800);">78</div>
<div class="t" style="right:271.50px;transform-origin:100% 0;top:539.99px;font-family:'Liberation Sans', sans-serif;font-weight:normal;font-size:17.5px;line-height:17.5px;color:#2b2b2b;transform:scaleX(1.0800);">86</div>
<div style="left:20px;top:561px;width:241px;height:25px;overflow:hidden"><div class="t" style="left:3.75px;transform-origin:0 0;top:2.78px;font-family:'Liberation Serif', serif;font-weight:bold;font-size:19.6px;line-height:19.6px;color:#000;transform:scaleX(1.0879);">Churned Customers</div></div>
<div class="t" style="right:1546.50px;transform-origin:100% 0;top:565.99px;font-family:'Liberation Sans', sans-serif;font-weight:normal;font-size:17.5px;line-height:17.5px;color:#2b2b2b;transform:scaleX(1.0800);">10</div>
<div class="t" style="right:1431.50px;transform-origin:100% 0;top:565.99px;font-family:'Liberation Sans', sans-serif;font-weight:normal;font-size:17.5px;line-height:17.5px;color:#2b2b2b;transform:scaleX(1.0800);">11</div>
<div class="t" style="right:1315.50px;transform-origin:100% 0;top:565.99px;font-family:'Liberation Sans', sans-serif;font-weight:normal;font-size:17.5px;line-height:17.5px;color:#2b2b2b;transform:scaleX(1.0800);">12</div>
<div class="t" style="right:1199.50px;transform-origin:100% 0;top:565.99px;font-family:'Liberation Sans', sans-serif;font-weight:normal;font-size:17.5px;line-height:17.5px;color:#2b2b2b;transform:scaleX(1.0800);">13</div>
<div class="t" style="right:1083.50px;transform-origin:100% 0;top:565.99px;font-family:'Liberation Sans', sans-serif;font-weight:normal;font-size:17.5px;line-height:17.5px;color:#2b2b2b;transform:scaleX(1.0800);">15</div>
<div class="t" style="right:967.50px;transform-origin:100% 0;top:565.99px;font-family:'Liberation Sans', sans-serif;font-weight:normal;font-size:17.5px;line-height:17.5px;color:#2b2b2b;transform:scaleX(1.0800);">16</div>
<div class="t" style="right:851.50px;transform-origin:100% 0;top:565.99px;font-family:'Liberation Sans', sans-serif;font-weight:normal;font-size:17.5px;line-height:17.5px;color:#2b2b2b;transform:scaleX(1.0800);">18</div>
<div class="t" style="right:735.50px;transform-origin:100% 0;top:565.99px;font-family:'Liberation Sans', sans-serif;font-weight:normal;font-size:17.5px;line-height:17.5px;color:#2b2b2b;transform:scaleX(1.0800);">19</div>
<div class="t" style="right:619.50px;transform-origin:100% 0;top:565.99px;font-family:'Liberation Sans', sans-serif;font-weight:normal;font-size:17.5px;line-height:17.5px;color:#2b2b2b;transform:scaleX(1.0800);">21</div>
<div class="t" style="right:503.50px;transform-origin:100% 0;top:565.99px;font-family:'Liberation Sans', sans-serif;font-weight:normal;font-size:17.5px;line-height:17.5px;color:#2b2b2b;transform:scaleX(1.0800);">24</div>
<div class="t" style="right:387.50px;transform-origin:100% 0;top:565.99px;font-family:'Liberation Sans', sans-serif;font-weight:normal;font-size:17.5px;line-height:17.5px;color:#2b2b2b;transform:scaleX(1.0800);">26</div>
<div class="t" style="right:271.50px;transform-origin:100% 0;top:565.99px;font-family:'Liberation Sans', sans-serif;font-weight:normal;font-size:17.5px;line-height:17.5px;color:#2b2b2b;transform:scaleX(1.0800);">29</div>
<div style="left:20px;top:587px;width:241px;height:25px;overflow:hidden"><div class="t" style="left:3.76px;transform-origin:0 0;top:2.78px;font-family:'Liberation Serif', serif;font-weight:bold;font-size:19.6px;line-height:19.6px;color:#000;transform:scaleX(1.0872);">Ending Customers</div></div>
<div class="t" style="right:1546.50px;transform-origin:100% 0;top:591.99px;font-family:'Liberation Sans', sans-serif;font-weight:normal;font-size:17.5px;line-height:17.5px;color:#2b2b2b;transform:scaleX(1.0800);">220</div>
<div class="t" style="right:1431.50px;transform-origin:100% 0;top:591.99px;font-family:'Liberation Sans', sans-serif;font-weight:normal;font-size:17.5px;line-height:17.5px;color:#2b2b2b;transform:scaleX(1.0800);">242</div>
<div class="t" style="right:1315.50px;transform-origin:100% 0;top:591.99px;font-family:'Liberation Sans', sans-serif;font-weight:normal;font-size:17.5px;line-height:17.5px;color:#2b2b2b;transform:scaleX(1.0800);">266</div>
<div class="t" style="right:1199.50px;transform-origin:100% 0;top:591.99px;font-family:'Liberation Sans', sans-serif;font-weight:normal;font-size:17.5px;line-height:17.5px;color:#2b2b2b;transform:scaleX(1.0800);">293</div>
<div class="t" style="right:1083.50px;transform-origin:100% 0;top:591.99px;font-family:'Liberation Sans', sans-serif;font-weight:normal;font-size:17.5px;line-height:17.5px;color:#2b2b2b;transform:scaleX(1.0800);">322</div>
<div class="t" style="right:967.50px;transform-origin:100% 0;top:591.99px;font-family:'Liberation Sans', sans-serif;font-weight:normal;font-size:17.5px;line-height:17.5px;color:#2b2b2b;transform:scaleX(1.0800);">354</div>
<div class="t" style="right:851.50px;transform-origin:100% 0;top:591.99px;font-family:'Liberation Sans', sans-serif;font-weight:normal;font-size:17.5px;line-height:17.5px;color:#2b2b2b;transform:scaleX(1.0800);">390</div>
<div class="t" style="right:735.50px;transform-origin:100% 0;top:591.99px;font-family:'Liberation Sans', sans-serif;font-weight:normal;font-size:17.5px;line-height:17.5px;color:#2b2b2b;transform:scaleX(1.0800);">429</div>
<div class="t" style="right:619.50px;transform-origin:100% 0;top:591.99px;font-family:'Liberation Sans', sans-serif;font-weight:normal;font-size:17.5px;line-height:17.5px;color:#2b2b2b;transform:scaleX(1.0800);">472</div>
<div class="t" style="right:503.50px;transform-origin:100% 0;top:591.99px;font-family:'Liberation Sans', sans-serif;font-weight:normal;font-size:17.5px;line-height:17.5px;color:#2b2b2b;transform:scaleX(1.0800);">519</div>
<div class="t" style="right:387.50px;transform-origin:100% 0;top:591.99px;font-family:'Liberation Sans', sans-serif;font-weight:normal;font-size:17.5px;line-height:17.5px;color:#2b2b2b;transform:scaleX(1.0800);">571</div>
<div class="t" style="right:271.50px;transform-origin:100% 0;top:591.99px;font-family:'Liberation Sans', sans-serif;font-weight:normal;font-size:17.5px;line-height:17.5px;color:#2b2b2b;transform:scaleX(1.0800);">628</div>
<div class="t" style="right:155.50px;transform-origin:100% 0;top:591.99px;font-family:'Liberation Sans', sans-serif;font-weight:normal;font-size:17.5px;line-height:17.5px;color:#2b2b2b;transform:scaleX(1.0800);">628</div>
<div style="left:20px;top:613px;width:241px;height:25px;overflow:hidden"><div class="t" style="left:3.75px;transform-origin:0 0;top:2.78px;font-family:'Liberation Serif', serif;font-weight:bold;font-size:19.6px;line-height:19.6px;color:#000;transform:scaleX(1.0902);">Monthly Revenue</div></div>
<div class="t" style="right:1546.50px;transform-origin:100% 0;top:617.99px;font-family:'Liberation Sans', sans-serif;font-weight:normal;font-size:17.5px;line-height:17.5px;color:#2b2b2b;transform:scaleX(1.0800);">$110,000</div>
<div class="t" style="right:1431.50px;transform-origin:100% 0;top:617.99px;font-family:'Liberation Sans', sans-serif;font-weight:normal;font-size:17.5px;line-height:17.5px;color:#2b2b2b;transform:scaleX(1.0800);">$121,000</div>
<div class="t" style="right:1315.50px;transform-origin:100% 0;top:617.99px;font-family:'Liberation Sans', sans-serif;font-weight:normal;font-size:17.5px;line-height:17.5px;color:#2b2b2b;transform:scaleX(1.0800);">$133,100</div>
<div class="t" style="right:1199.50px;transform-origin:100% 0;top:617.99px;font-family:'Liberation Sans', sans-serif;font-weight:normal;font-size:17.5px;line-height:17.5px;color:#2b2b2b;transform:scaleX(1.0800);">$146,410</div>
<div class="t" style="right:1083.50px;transform-origin:100% 0;top:617.99px;font-family:'Liberation Sans', sans-serif;font-weight:normal;font-size:17.5px;line-height:17.5px;color:#2b2b2b;transform:scaleX(1.0800);">$161,051</div>
<div class="t" style="right:967.50px;transform-origin:100% 0;top:617.99px;font-family:'Liberation Sans', sans-serif;font-weight:normal;font-size:17.5px;line-height:17.5px;color:#2b2b2b;transform:scaleX(1.0800);">$177,156</div>
<div class="t" style="right:851.50px;transform-origin:100% 0;top:617.99px;font-family:'Liberation Sans', sans-serif;font-weight:normal;font-size:17.5px;line-height:17.5px;color:#2b2b2b;transform:scaleX(1.0800);">$194,872</div>
<div class="t" style="right:735.50px;transform-origin:100% 0;top:617.99px;font-family:'Liberation Sans', sans-serif;font-weight:normal;font-size:17.5px;line-height:17.5px;color:#2b2b2b;transform:scaleX(1.0800);">$214,359</div>
<div class="t" style="right:619.50px;transform-origin:100% 0;top:617.99px;font-family:'Liberation Sans', sans-serif;font-weight:normal;font-size:17.5px;line-height:17.5px;color:#2b2b2b;transform:scaleX(1.0800);">$235,795</div>
<div class="t" style="right:503.50px;transform-origin:100% 0;top:617.99px;font-family:'Liberation Sans', sans-serif;font-weight:normal;font-size:17.5px;line-height:17.5px;color:#2b2b2b;transform:scaleX(1.0800);">$259,374</div>
<div class="t" style="right:387.50px;transform-origin:100% 0;top:617.99px;font-family:'Liberation Sans', sans-serif;font-weight:normal;font-size:17.5px;line-height:17.5px;color:#2b2b2b;transform:scaleX(1.0800);">$285,312</div>
<div class="t" style="right:271.50px;transform-origin:100% 0;top:617.99px;font-family:'Liberation Sans', sans-serif;font-weight:normal;font-size:17.5px;line-height:17.5px;color:#2b2b2b;transform:scaleX(1.0800);">$313,843</div>
<div class="t" style="right:155.50px;transform-origin:100% 0;top:617.99px;font-family:'Liberation Sans', sans-serif;font-weight:normal;font-size:17.5px;line-height:17.5px;color:#2b2b2b;transform:scaleX(1.0800);">$2,352,271</div>
<div style="left:20px;top:691px;width:241px;height:25px;overflow:hidden"><div class="t" style="left:3.75px;transform-origin:0 0;top:2.78px;font-family:'Liberation Serif', serif;font-weight:bold;font-size:19.6px;line-height:19.6px;color:#000;transform:scaleX(1.1060);">Engineering (50%)</div></div>
<div class="t" style="right:1546.50px;transform-origin:100% 0;top:695.99px;font-family:'Liberation Sans', sans-serif;font-weight:normal;font-size:17.5px;line-height:17.5px;color:#2b2b2b;transform:scaleX(1.0800);">8</div>
<div class="t" style="right:1431.50px;transform-origin:100% 0;top:695.99px;font-family:'Liberation Sans', sans-serif;font-weight:normal;font-size:17.5px;line-height:17.5px;color:#2b2b2b;transform:scaleX(1.0800);">8</div>
<div class="t" style="right:1315.50px;transform-origin:100% 0;top:695.99px;font-family:'Liberation Sans', sans-serif;font-weight:normal;font-size:17.5px;line-height:17.5px;color:#2b2b2b;transform:scaleX(1.0800);">8</div>
<div class="t" style="right:1199.50px;transform-origin:100% 0;top:695.99px;font-family:'Liberation Sans', sans-serif;font-weight:normal;font-size:17.5px;line-height:17.5px;color:#2b2b2b;transform:scaleX(1.0800);">9</div>
<div class="t" style="right:1083.50px;transform-origin:100% 0;top:695.99px;font-family:'Liberation Sans', sans-serif;font-weight:normal;font-size:17.5px;line-height:17.5px;color:#2b2b2b;transform:scaleX(1.0800);">9</div>
<div class="t" style="right:967.50px;transform-origin:100% 0;top:695.99px;font-family:'Liberation Sans', sans-serif;font-weight:normal;font-size:17.5px;line-height:17.5px;color:#2b2b2b;transform:scaleX(1.0800);">9</div>
<div class="t" style="right:851.50px;transform-origin:100% 0;top:695.99px;font-family:'Liberation Sans', sans-serif;font-weight:normal;font-size:17.5px;line-height:17.5px;color:#2b2b2b;transform:scaleX(1.0800);">11</div>
<div class="t" style="right:735.50px;transform-origin:100% 0;top:695.99px;font-family:'Liberation Sans', sans-serif;font-weight:normal;font-size:17.5px;line-height:17.5px;color:#2b2b2b;transform:scaleX(1.0800);">11</div>
<div class="t" style="right:619.50px;transform-origin:100% 0;top:695.99px;font-family:'Liberation Sans', sans-serif;font-weight:normal;font-size:17.5px;line-height:17.5px;color:#2b2b2b;transform:scaleX(1.0800);">11</div>
<div class="t" style="right:503.50px;transform-origin:100% 0;top:695.99px;font-family:'Liberation Sans', sans-serif;font-weight:normal;font-size:17.5px;line-height:17.5px;color:#2b2b2b;transform:scaleX(1.0800);">12</div>
<div class="t" style="right:387.50px;transform-origin:100% 0;top:695.99px;font-family:'Liberation Sans', sans-serif;font-weight:normal;font-size:17.5px;line-height:17.5px;color:#2b2b2b;transform:scaleX(1.0800);">12</div>
<div class="t" style="right:271.50px;transform-origin:100% 0;top:695.99px;font-family:'Liberation Sans', sans-serif;font-weight:normal;font-size:17.5px;line-height:17.5px;color:#2b2b2b;transform:scaleX(1.0800);">12</div>
<div style="left:20px;top:717px;width:241px;height:24px;overflow:hidden"><div class="t" style="left:2.74px;transform-origin:0 0;top:1.78px;font-family:'Liberation Serif', serif;font-weight:bold;font-size:19.6px;line-height:19.6px;color:#000;transform:scaleX(1.1026);">Sales (30%)</div></div>
<div class="t" style="right:1546.50px;transform-origin:100% 0;top:720.99px;font-family:'Liberation Sans', sans-serif;font-weight:normal;font-size:17.5px;line-height:17.5px;color:#2b2b2b;transform:scaleX(1.0800);">5</div>
<div class="t" style="right:1431.50px;transform-origin:100% 0;top:720.99px;font-family:'Liberation Sans', sans-serif;font-weight:normal;font-size:17.5px;line-height:17.5px;color:#2b2b2b;transform:scaleX(1.0800);">5</div>
<div class="t" style="right:1315.50px;transform-origin:100% 0;top:720.99px;font-family:'Liberation Sans', sans-serif;font-weight:normal;font-size:17.5px;line-height:17.5px;color:#2b2b2b;transform:scaleX(1.0800);">5</div>
<div class="t" style="right:1199.50px;transform-origin:100% 0;top:720.99px;font-family:'Liberation Sans', sans-serif;font-weight:normal;font-size:17.5px;line-height:17.5px;color:#2b2b2b;transform:scaleX(1.0800);">5</div>
<div class="t" style="right:1083.50px;transform-origin:100% 0;top:720.99px;font-family:'Liberation Sans', sans-serif;font-weight:normal;font-size:17.5px;line-height:17.5px;color:#2b2b2b;transform:scaleX(1.0800);">5</div>
<div class="t" style="right:967.50px;transform-origin:100% 0;top:720.99px;font-family:'Liberation Sans', sans-serif;font-weight:normal;font-size:17.5px;line-height:17.5px;color:#2b2b2b;transform:scaleX(1.0800);">5</div>
<div class="t" style="right:851.50px;transform-origin:100% 0;top:720.99px;font-family:'Liberation Sans', sans-serif;font-weight:normal;font-size:17.5px;line-height:17.5px;color:#2b2b2b;transform:scaleX(1.0800);">6</div>
<div class="t" style="right:735.50px;transform-origin:100% 0;top:720.99px;font-family:'Liberation Sans', sans-serif;font-weight:normal;font-size:17.5px;line-height:17.5px;color:#2b2b2b;transform:scaleX(1.0800);">6</div>
<div class="t" style="right:619.50px;transform-origin:100% 0;top:720.99px;font-family:'Liberation Sans', sans-serif;font-weight:normal;font-size:17.5px;line-height:17.5px;color:#2b2b2b;transform:scaleX(1.0800);">6</div>
<div class="t" style="right:503.50px;transform-origin:100% 0;top:720.99px;font-family:'Liberation Sans', sans-serif;font-weight:normal;font-size:17.5px;line-height:17.5px;color:#2b2b2b;transform:scaleX(1.0800);">7</div>
<div class="t" style="right:387.50px;transform-origin:100% 0;top:720.99px;font-family:'Liberation Sans', sans-serif;font-weight:normal;font-size:17.5px;line-height:17.5px;color:#2b2b2b;transform:scaleX(1.0800);">7</div>
<div class="t" style="right:271.50px;transform-origin:100% 0;top:720.99px;font-family:'Liberation Sans', sans-serif;font-weight:normal;font-size:17.5px;line-height:17.5px;color:#2b2b2b;transform:scaleX(1.0800);">7</div>
<div style="left:20px;top:742px;width:241px;height:25px;overflow:hidden"><div class="t" style="left:2.73px;transform-origin:0 0;top:2.78px;font-family:'Liberation Serif', serif;font-weight:bold;font-size:19.6px;line-height:19.6px;color:#000;transform:scaleX(1.1120);">Support (20%)</div></div>
<div class="t" style="right:1546.50px;transform-origin:100% 0;top:746.99px;font-family:'Liberation Sans', sans-serif;font-weight:normal;font-size:17.5px;line-height:17.5px;color:#2b2b2b;transform:scaleX(1.0800);">3</div>
<div class="t" style="right:1431.50px;transform-origin:100% 0;top:746.99px;font-family:'Liberation Sans', sans-serif;font-weight:normal;font-size:17.5px;line-height:17.5px;color:#2b2b2b;transform:scaleX(1.0800);">3</div>
<div class="t" style="right:1315.50px;transform-origin:100% 0;top:746.99px;font-family:'Liberation Sans', sans-serif;font-weight:normal;font-size:17.5px;line-height:17.5px;color:#2b2b2b;transform:scaleX(1.0800);">3</div>
<div class="t" style="right:1199.50px;transform-origin:100% 0;top:746.99px;font-family:'Liberation Sans', sans-serif;font-weight:normal;font-size:17.5px;line-height:17.5px;color:#2b2b2b;transform:scaleX(1.0800);">4</div>
<div class="t" style="right:1083.50px;transform-origin:100% 0;top:746.99px;font-family:'Liberation Sans', sans-serif;font-weight:normal;font-size:17.5px;line-height:17.5px;color:#2b2b2b;transform:scaleX(1.0800);">4</div>
<div class="t" style="right:967.50px;transform-origin:100% 0;top:746.99px;font-family:'Liberation Sans', sans-serif;font-weight:normal;font-size:17.5px;line-height:17.5px;color:#2b2b2b;transform:scaleX(1.0800);">4</div>
<div class="t" style="right:851.50px;transform-origin:100% 0;top:746.99px;font-family:'Liberation Sans', sans-serif;font-weight:normal;font-size:17.5px;line-height:17.5px;color:#2b2b2b;transform:scaleX(1.0800);">4</div>
<div class="t" style="right:735.50px;transform-origin:100% 0;top:746.99px;font-family:'Liberation Sans', sans-serif;font-weight:normal;font-size:17.5px;line-height:17.5px;color:#2b2b2b;transform:scaleX(1.0800);">4</div>
<div class="t" style="right:619.50px;transform-origin:100% 0;top:746.99px;font-family:'Liberation Sans', sans-serif;font-weight:normal;font-size:17.5px;line-height:17.5px;color:#2b2b2b;transform:scaleX(1.0800);">4</div>
<div class="t" style="right:503.50px;transform-origin:100% 0;top:746.99px;font-family:'Liberation Sans', sans-serif;font-weight:normal;font-size:17.5px;line-height:17.5px;color:#2b2b2b;transform:scaleX(1.0800);">5</div>
<div class="t" style="right:387.50px;transform-origin:100% 0;top:746.99px;font-family:'Liberation Sans', sans-serif;font-weight:normal;font-size:17.5px;line-height:17.5px;color:#2b2b2b;transform:scaleX(1.0800);">5</div>
<div class="t" style="right:271.50px;transform-origin:100% 0;top:746.99px;font-family:'Liberation Sans', sans-serif;font-weight:normal;font-size:17.5px;line-height:17.5px;color:#2b2b2b;transform:scaleX(1.0800);">5</div>
<div style="left:20px;top:768px;width:241px;height:25px;overflow:hidden"><div class="t" style="left:3.75px;transform-origin:0 0;top:2.78px;font-family:'Liberation Serif', serif;font-weight:bold;font-size:19.6px;line-height:19.6px;color:#000;transform:scaleX(1.0964);">Total Headcount</div></div>
<div class="t" style="right:1546.50px;transform-origin:100% 0;top:772.99px;font-family:'Liberation Sans', sans-serif;font-weight:normal;font-size:17.5px;line-height:17.5px;color:#2b2b2b;transform:scaleX(1.0800);">15</div>
<div class="t" style="right:1431.50px;transform-origin:100% 0;top:772.99px;font-family:'Liberation Sans', sans-serif;font-weight:normal;font-size:17.5px;line-height:17.5px;color:#2b2b2b;transform:scaleX(1.0800);">15</div>
<div class="t" style="right:1315.50px;transform-origin:100% 0;top:772.99px;font-family:'Liberation Sans', sans-serif;font-weight:normal;font-size:17.5px;line-height:17.5px;color:#2b2b2b;transform:scaleX(1.0800);">15</div>
<div class="t" style="right:1199.50px;transform-origin:100% 0;top:772.99px;font-family:'Liberation Sans', sans-serif;font-weight:normal;font-size:17.5px;line-height:17.5px;color:#2b2b2b;transform:scaleX(1.0800);">18</div>
<div class="t" style="right:1083.50px;transform-origin:100% 0;top:772.99px;font-family:'Liberation Sans', sans-serif;font-weight:normal;font-size:17.5px;line-height:17.5px;color:#2b2b2b;transform:scaleX(1.0800);">18</div>
<div class="t" style="right:967.50px;transform-origin:100% 0;top:772.99px;font-family:'Liberation Sans', sans-serif;font-weight:normal;font-size:17.5px;line-height:17.5px;color:#2b2b2b;transform:scaleX(1.0800);">18</div>
<div class="t" style="right:851.50px;transform-origin:100% 0;top:772.99px;font-family:'Liberation Sans', sans-serif;font-weight:normal;font-size:17.5px;line-height:17.5px;color:#2b2b2b;transform:scaleX(1.0800);">21</div>
<div class="t" style="right:735.50px;transform-origin:100% 0;top:772.99px;font-family:'Liberation Sans', sans-serif;font-weight:normal;font-size:17.5px;line-height:17.5px;color:#2b2b2b;transform:scaleX(1.0800);">21</div>
<div class="t" style="right:619.50px;transform-origin:100% 0;top:772.99px;font-family:'Liberation Sans', sans-serif;font-weight:normal;font-size:17.5px;line-height:17.5px;color:#2b2b2b;transform:scaleX(1.0800);">21</div>
<div class="t" style="right:503.50px;transform-origin:100% 0;top:772.99px;font-family:'Liberation Sans', sans-serif;font-weight:normal;font-size:17.5px;line-height:17.5px;color:#2b2b2b;transform:scaleX(1.0800);">24</div>
<div class="t" style="right:387.50px;transform-origin:100% 0;top:772.99px;font-family:'Liberation Sans', sans-serif;font-weight:normal;font-size:17.5px;line-height:17.5px;color:#2b2b2b;transform:scaleX(1.0800);">24</div>
<div class="t" style="right:271.50px;transform-origin:100% 0;top:772.99px;font-family:'Liberation Sans', sans-serif;font-weight:normal;font-size:17.5px;line-height:17.5px;color:#2b2b2b;transform:scaleX(1.0800);">24</div>
<div class="t" style="right:155.50px;transform-origin:100% 0;top:772.99px;font-family:'Liberation Sans', sans-serif;font-weight:normal;font-size:17.5px;line-height:17.5px;color:#2b2b2b;transform:scaleX(1.0800);">24</div>
<div style="left:20px;top:794px;width:241px;height:25px;overflow:hidden"><div class="t" style="left:3.76px;transform-origin:0 0;top:2.78px;font-family:'Liberation Serif', serif;font-weight:bold;font-size:19.6px;line-height:19.6px;color:#000;transform:scaleX(1.0745);">Monthly Payroll</div></div>
<div class="t" style="right:1546.50px;transform-origin:100% 0;top:798.99px;font-family:'Liberation Sans', sans-serif;font-weight:normal;font-size:17.5px;line-height:17.5px;color:#2b2b2b;transform:scaleX(1.0800);">$150,000</div>
<div class="t" style="right:1431.50px;transform-origin:100% 0;top:798.99px;font-family:'Liberation Sans', sans-serif;font-weight:normal;font-size:17.5px;line-height:17.5px;color:#2b2b2b;transform:scaleX(1.0800);">$150,000</div>
<div class="t" style="right:1315.50px;transform-origin:100% 0;top:798.99px;font-family:'Liberation Sans', sans-serif;font-weight:normal;font-size:17.5px;line-height:17.5px;color:#2b2b2b;transform:scaleX(1.0800);">$150,000</div>
<div class="t" style="right:1199.50px;transform-origin:100% 0;top:798.99px;font-family:'Liberation Sans', sans-serif;font-weight:normal;font-size:17.5px;line-height:17.5px;color:#2b2b2b;transform:scaleX(1.0800);">$180,000</div>
<div class="t" style="right:1083.50px;transform-origin:100% 0;top:798.99px;font-family:'Liberation Sans', sans-serif;font-weight:normal;font-size:17.5px;line-height:17.5px;color:#2b2b2b;transform:scaleX(1.0800);">$180,000</div>
<div class="t" style="right:967.50px;transform-origin:100% 0;top:798.99px;font-family:'Liberation Sans', sans-serif;font-weight:normal;font-size:17.5px;line-height:17.5px;color:#2b2b2b;transform:scaleX(1.0800);">$180,000</div>
<div class="t" style="right:851.50px;transform-origin:100% 0;top:798.99px;font-family:'Liberation Sans', sans-serif;font-weight:normal;font-size:17.5px;line-height:17.5px;color:#2b2b2b;transform:scaleX(1.0800);">$210,000</div>
<div class="t" style="right:735.50px;transform-origin:100% 0;top:798.99px;font-family:'Liberation Sans', sans-serif;font-weight:normal;font-size:17.5px;line-height:17.5px;color:#2b2b2b;transform:scaleX(1.0800);">$210,000</div>
<div class="t" style="right:619.50px;transform-origin:100% 0;top:798.99px;font-family:'Liberation Sans', sans-serif;font-weight:normal;font-size:17.5px;line-height:17.5px;color:#2b2b2b;transform:scaleX(1.0800);">$210,000</div>
<div class="t" style="right:503.50px;transform-origin:100% 0;top:798.99px;font-family:'Liberation Sans', sans-serif;font-weight:normal;font-size:17.5px;line-height:17.5px;color:#2b2b2b;transform:scaleX(1.0800);">$240,000</div>
<div class="t" style="right:387.50px;transform-origin:100% 0;top:798.99px;font-family:'Liberation Sans', sans-serif;font-weight:normal;font-size:17.5px;line-height:17.5px;color:#2b2b2b;transform:scaleX(1.0800);">$240,000</div>
<div class="t" style="right:271.50px;transform-origin:100% 0;top:798.99px;font-family:'Liberation Sans', sans-serif;font-weight:normal;font-size:17.5px;line-height:17.5px;color:#2b2b2b;transform:scaleX(1.0800);">$240,000</div>
<div class="t" style="right:155.50px;transform-origin:100% 0;top:798.99px;font-family:'Liberation Sans', sans-serif;font-weight:normal;font-size:17.5px;line-height:17.5px;color:#2b2b2b;transform:scaleX(1.0800);">$2,340,000</div>
<div style="left:20px;top:872px;width:241px;height:25px;overflow:hidden"><div class="t" style="left:3.76px;transform-origin:0 0;top:2.78px;font-family:'Liberation Serif', serif;font-weight:bold;font-size:19.6px;line-height:19.6px;color:#000;transform:scaleX(1.0750);">Marketing</div></div>
<div class="t" style="right:1546.50px;transform-origin:100% 0;top:876.99px;font-family:'Liberation Sans', sans-serif;font-weight:normal;font-size:17.5px;line-height:17.5px;color:#2b2b2b;transform:scaleX(1.0800);">$20,000</div>
<div class="t" style="right:1431.50px;transform-origin:100% 0;top:876.99px;font-family:'Liberation Sans', sans-serif;font-weight:normal;font-size:17.5px;line-height:17.5px;color:#2b2b2b;transform:scaleX(1.0800);">$20,000</div>
<div class="t" style="right:1315.50px;transform-origin:100% 0;top:876.99px;font-family:'Liberation Sans', sans-serif;font-weight:normal;font-size:17.5px;line-height:17.5px;color:#2b2b2b;transform:scaleX(1.0800);">$20,000</div>
<div class="t" style="right:1199.50px;transform-origin:100% 0;top:876.99px;font-family:'Liberation Sans', sans-serif;font-weight:normal;font-size:17.5px;line-height:17.5px;color:#2b2b2b;transform:scaleX(1.0800);">$22,000</div>
<div class="t" style="right:1083.50px;transform-origin:100% 0;top:876.99px;font-family:'Liberation Sans', sans-serif;font-weight:normal;font-size:17.5px;line-height:17.5px;color:#2b2b2b;transform:scaleX(1.0800);">$22,000</div>
<div class="t" style="right:967.50px;transform-origin:100% 0;top:876.99px;font-family:'Liberation Sans', sans-serif;font-weight:normal;font-size:17.5px;line-height:17.5px;color:#2b2b2b;transform:scaleX(1.0800);">$22,000</div>
<div class="t" style="right:851.50px;transform-origin:100% 0;top:876.99px;font-family:'Liberation Sans', sans-serif;font-weight:normal;font-size:17.5px;line-height:17.5px;color:#2b2b2b;transform:scaleX(1.0800);">$24,200</div>
<div class="t" style="right:735.50px;transform-origin:100% 0;top:876.99px;font-family:'Liberation Sans', sans-serif;font-weight:normal;font-size:17.5px;line-height:17.5px;color:#2b2b2b;transform:scaleX(1.0800);">$24,200</div>
<div class="t" style="right:619.50px;transform-origin:100% 0;top:876.99px;font-family:'Liberation Sans', sans-serif;font-weight:normal;font-size:17.5px;line-height:17.5px;color:#2b2b2b;transform:scaleX(1.0800);">$24,200</div>
<div class="t" style="right:503.50px;transform-origin:100% 0;top:876.99px;font-family:'Liberation Sans', sans-serif;font-weight:normal;font-size:17.5px;line-height:17.5px;color:#2b2b2b;transform:scaleX(1.0800);">$26,620</div>
<div class="t" style="right:387.50px;transform-origin:100% 0;top:876.99px;font-family:'Liberation Sans', sans-serif;font-weight:normal;font-size:17.5px;line-height:17.5px;color:#2b2b2b;transform:scaleX(1.0800);">$26,620</div>
<div class="t" style="right:271.50px;transform-origin:100% 0;top:876.99px;font-family:'Liberation Sans', sans-serif;font-weight:normal;font-size:17.5px;line-height:17.5px;color:#2b2b2b;transform:scaleX(1.0800);">$26,620</div>
<div class="t" style="right:155.50px;transform-origin:100% 0;top:876.99px;font-family:'Liberation Sans', sans-serif;font-weight:normal;font-size:17.5px;line-height:17.5px;color:#2b2b2b;transform:scaleX(1.0800);">$278,460</div>
<div style="left:20px;top:898px;width:241px;height:24px;overflow:hidden"><div class="t" style="left:3.76px;transform-origin:0 0;top:1.78px;font-family:'Liberation Serif', serif;font-weight:bold;font-size:19.6px;line-height:19.6px;color:#000;transform:scaleX(1.0609);">Office Lease</div></div>
<div class="t" style="right:1546.50px;transform-origin:100% 0;top:901.99px;font-family:'Liberation Sans', sans-serif;font-weight:normal;font-size:17.5px;line-height:17.5px;color:#2b2b2b;transform:scaleX(1.0800);">$8,000</div>
<div class="t" style="right:1431.50px;transform-origin:100% 0;top:901.99px;font-family:'Liberation Sans', sans-serif;font-weight:normal;font-size:17.5px;line-height:17.5px;color:#2b2b2b;transform:scaleX(1.0800);">$8,000</div>
<div class="t" style="right:1315.50px;transform-origin:100% 0;top:901.99px;font-family:'Liberation Sans', sans-serif;font-weight:normal;font-size:17.5px;line-height:17.5px;color:#2b2b2b;transform:scaleX(1.0800);">$8,000</div>
<div class="t" style="right:1199.50px;transform-origin:100% 0;top:901.99px;font-family:'Liberation Sans', sans-serif;font-weight:normal;font-size:17.5px;line-height:17.5px;color:#2b2b2b;transform:scaleX(1.0800);">$8,000</div>
<div class="t" style="right:1083.50px;transform-origin:100% 0;top:901.99px;font-family:'Liberation Sans', sans-serif;font-weight:normal;font-size:17.5px;line-height:17.5px;color:#2b2b2b;transform:scaleX(1.0800);">$8,000</div>
<div class="t" style="right:967.50px;transform-origin:100% 0;top:901.99px;font-family:'Liberation Sans', sans-serif;font-weight:normal;font-size:17.5px;line-height:17.5px;color:#2b2b2b;transform:scaleX(1.0800);">$8,000</div>
<div class="t" style="right:851.50px;transform-origin:100% 0;top:901.99px;font-family:'Liberation Sans', sans-serif;font-weight:normal;font-size:17.5px;line-height:17.5px;color:#2b2b2b;transform:scaleX(1.0800);">$8,000</div>
<div class="t" style="right:735.50px;transform-origin:100% 0;top:901.99px;font-family:'Liberation Sans', sans-serif;font-weight:normal;font-size:17.5px;line-height:17.5px;color:#2b2b2b;transform:scaleX(1.0800);">$8,000</div>
<div class="t" style="right:619.50px;transform-origin:100% 0;top:901.99px;font-family:'Liberation Sans', sans-serif;font-weight:normal;font-size:17.5px;line-height:17.5px;color:#2b2b2b;transform:scaleX(1.0800);">$8,000</div>
<div class="t" style="right:503.50px;transform-origin:100% 0;top:901.99px;font-family:'Liberation Sans', sans-serif;font-weight:normal;font-size:17.5px;line-height:17.5px;color:#2b2b2b;transform:scaleX(1.0800);">$8,000</div>
<div class="t" style="right:387.50px;transform-origin:100% 0;top:901.99px;font-family:'Liberation Sans', sans-serif;font-weight:normal;font-size:17.5px;line-height:17.5px;color:#2b2b2b;transform:scaleX(1.0800);">$8,000</div>
<div class="t" style="right:271.50px;transform-origin:100% 0;top:901.99px;font-family:'Liberation Sans', sans-serif;font-weight:normal;font-size:17.5px;line-height:17.5px;color:#2b2b2b;transform:scaleX(1.0800);">$8,000</div>
<div class="t" style="right:155.50px;transform-origin:100% 0;top:901.99px;font-family:'Liberation Sans', sans-serif;font-weight:normal;font-size:17.5px;line-height:17.5px;color:#2b2b2b;transform:scaleX(1.0800);">$96,000</div>
<div style="left:20px;top:923px;width:241px;height:25px;overflow:hidden"><div class="t" style="left:3.20px;transform-origin:0 0;top:2.78px;font-family:'Liberation Serif', serif;font-weight:bold;font-size:19.6px;line-height:19.6px;color:#000;transform:scaleX(1.1000);">SaaS Tools (5% of payroll)</div></div>
<div class="t" style="right:1546.50px;transform-origin:100% 0;top:927.99px;font-family:'Liberation Sans', sans-serif;font-weight:normal;font-size:17.5px;line-height:17.5px;color:#2b2b2b;transform:scaleX(1.0800);">$7,500</div>
<div class="t" style="right:1431.50px;transform-origin:100% 0;top:927.99px;font-family:'Liberation Sans', sans-serif;font-weight:normal;font-size:17.5px;line-height:17.5px;color:#2b2b2b;transform:scaleX(1.0800);">$7,500</div>
<div class="t" style="right:1315.50px;transform-origin:100% 0;top:927.99px;font-family:'Liberation Sans', sans-serif;font-weight:normal;font-size:17.5px;line-height:17.5px;color:#2b2b2b;transform:scaleX(1.0800);">$7,500</div>
<div class="t" style="right:1199.50px;transform-origin:100% 0;top:927.99px;font-family:'Liberation Sans', sans-serif;font-weight:normal;font-size:17.5px;line-height:17.5px;color:#2b2b2b;transform:scaleX(1.0800);">$9,000</div>
<div class="t" style="right:1083.50px;transform-origin:100% 0;top:927.99px;font-family:'Liberation Sans', sans-serif;font-weight:normal;font-size:17.5px;line-height:17.5px;color:#2b2b2b;transform:scaleX(1.0800);">$9,000</div>
<div class="t" style="right:967.50px;transform-origin:100% 0;top:927.99px;font-family:'Liberation Sans', sans-serif;font-weight:normal;font-size:17.5px;line-height:17.5px;color:#2b2b2b;transform:scaleX(1.0800);">$9,000</div>
<div class="t" style="right:851.50px;transform-origin:100% 0;top:927.99px;font-family:'Liberation Sans', sans-serif;font-weight:normal;font-size:17.5px;line-height:17.5px;color:#2b2b2b;transform:scaleX(1.0800);">$10,500</div>
<div class="t" style="right:735.50px;transform-origin:100% 0;top:927.99px;font-family:'Liberation Sans', sans-serif;font-weight:normal;font-size:17.5px;line-height:17.5px;color:#2b2b2b;transform:scaleX(1.0800);">$10,500</div>
<div class="t" style="right:619.50px;transform-origin:100% 0;top:927.99px;font-family:'Liberation Sans', sans-serif;font-weight:normal;font-size:17.5px;line-height:17.5px;color:#2b2b2b;transform:scaleX(1.0800);">$10,500</div>
<div class="t" style="right:503.50px;transform-origin:100% 0;top:927.99px;font-family:'Liberation Sans', sans-serif;font-weight:normal;font-size:17.5px;line-height:17.5px;color:#2b2b2b;transform:scaleX(1.0800);">$12,000</div>
<div class="t" style="right:387.50px;transform-origin:100% 0;top:927.99px;font-family:'Liberation Sans', sans-serif;font-weight:normal;font-size:17.5px;line-height:17.5px;color:#2b2b2b;transform:scaleX(1.0800);">$12,000</div>
<div class="t" style="right:271.50px;transform-origin:100% 0;top:927.99px;font-family:'Liberation Sans', sans-serif;font-weight:normal;font-size:17.5px;line-height:17.5px;color:#2b2b2b;transform:scaleX(1.0800);">$12,000</div>
<div class="t" style="right:155.50px;transform-origin:100% 0;top:927.99px;font-family:'Liberation Sans', sans-serif;font-weight:normal;font-size:17.5px;line-height:17.5px;color:#2b2b2b;transform:scaleX(1.0800);">$117,000</div>
<div style="left:20px;top:949px;width:241px;height:25px;overflow:hidden"><div class="t" style="left:3.77px;transform-origin:0 0;top:2.78px;font-family:'Liberation Serif', serif;font-weight:bold;font-size:19.6px;line-height:19.6px;color:#000;transform:scaleX(1.0584);">Insurance &amp; Legal</div></div>
<div class="t" style="right:1546.50px;transform-origin:100% 0;top:953.99px;font-family:'Liberation Sans', sans-serif;font-weight:normal;font-size:17.5px;line-height:17.5px;color:#2b2b2b;transform:scaleX(1.0800);">$2,000</div>
<div class="t" style="right:1431.50px;transform-origin:100% 0;top:953.99px;font-family:'Liberation Sans', sans-serif;font-weight:normal;font-size:17.5px;line-height:17.5px;color:#2b2b2b;transform:scaleX(1.0800);">$2,000</div>
<div class="t" style="right:1315.50px;transform-origin:100% 0;top:953.99px;font-family:'Liberation Sans', sans-serif;font-weight:normal;font-size:17.5px;line-height:17.5px;color:#2b2b2b;transform:scaleX(1.0800);">$2,000</div>
<div class="t" style="right:1199.50px;transform-origin:100% 0;top:953.99px;font-family:'Liberation Sans', sans-serif;font-weight:normal;font-size:17.5px;line-height:17.5px;color:#2b2b2b;transform:scaleX(1.0800);">$2,000</div>
<div class="t" style="right:1083.50px;transform-origin:100% 0;top:953.99px;font-family:'Liberation Sans', sans-serif;font-weight:normal;font-size:17.5px;line-height:17.5px;color:#2b2b2b;transform:scaleX(1.0800);">$2,000</div>
<div class="t" style="right:967.50px;transform-origin:100% 0;top:953.99px;font-family:'Liberation Sans', sans-serif;font-weight:normal;font-size:17.5px;line-height:17.5px;color:#2b2b2b;transform:scaleX(1.0800);">$2,000</div>
<div class="t" style="right:851.50px;transform-origin:100% 0;top:953.99px;font-family:'Liberation Sans', sans-serif;font-weight:normal;font-size:17.5px;line-height:17.5px;color:#2b2b2b;transform:scaleX(1.0800);">$2,000</div>
<div class="t" style="right:735.50px;transform-origin:100% 0;top:953.99px;font-family:'Liberation Sans', sans-serif;font-weight:normal;font-size:17.5px;line-height:17.5px;color:#2b2b2b;transform:scaleX(1.0800);">$2,000</div>
<div class="t" style="right:619.50px;transform-origin:100% 0;top:953.99px;font-family:'Liberation Sans', sans-serif;font-weight:normal;font-size:17.5px;line-height:17.5px;color:#2b2b2b;transform:scaleX(1.0800);">$2,000</div>
<div class="t" style="right:503.50px;transform-origin:100% 0;top:953.99px;font-family:'Liberation Sans', sans-serif;font-weight:normal;font-size:17.5px;line-height:17.5px;color:#2b2b2b;transform:scaleX(1.0800);">$2,000</div>
<div class="t" style="right:387.50px;transform-origin:100% 0;top:953.99px;font-family:'Liberation Sans', sans-serif;font-weight:normal;font-size:17.5px;line-height:17.5px;color:#2b2b2b;transform:scaleX(1.0800);">$2,000</div>
<div class="t" style="right:271.50px;transform-origin:100% 0;top:953.99px;font-family:'Liberation Sans', sans-serif;font-weight:normal;font-size:17.5px;line-height:17.5px;color:#2b2b2b;transform:scaleX(1.0800);">$2,000</div>
<div class="t" style="right:155.50px;transform-origin:100% 0;top:953.99px;font-family:'Liberation Sans', sans-serif;font-weight:normal;font-size:17.5px;line-height:17.5px;color:#2b2b2b;transform:scaleX(1.0800);">$24,000</div>
<div style="left:20px;top:975px;width:241px;height:25px;overflow:hidden"><div class="t" style="left:3.80px;transform-origin:0 0;top:2.78px;font-family:'Liberation Serif', serif;font-weight:bold;font-size:19.6px;line-height:19.6px;color:#000;transform:scaleX(0.9910);">Other G&amp;A</div></div>
<div class="t" style="right:1546.50px;transform-origin:100% 0;top:979.99px;font-family:'Liberation Sans', sans-serif;font-weight:normal;font-size:17.5px;line-height:17.5px;color:#2b2b2b;transform:scaleX(1.0800);">$3,000</div>
<div class="t" style="right:1431.50px;transform-origin:100% 0;top:979.99px;font-family:'Liberation Sans', sans-serif;font-weight:normal;font-size:17.5px;line-height:17.5px;color:#2b2b2b;transform:scaleX(1.0800);">$3,000</div>
<div class="t" style="right:1315.50px;transform-origin:100% 0;top:979.99px;font-family:'Liberation Sans', sans-serif;font-weight:normal;font-size:17.5px;line-height:17.5px;color:#2b2b2b;transform:scaleX(1.0800);">$3,000</div>
<div class="t" style="right:1199.50px;transform-origin:100% 0;top:979.99px;font-family:'Liberation Sans', sans-serif;font-weight:normal;font-size:17.5px;line-height:17.5px;color:#2b2b2b;transform:scaleX(1.0800);">$3,000</div>
<div class="t" style="right:1083.50px;transform-origin:100% 0;top:979.99px;font-family:'Liberation Sans', sans-serif;font-weight:normal;font-size:17.5px;line-height:17.5px;color:#2b2b2b;transform:scaleX(1.0800);">$3,000</div>
<div class="t" style="right:967.50px;transform-origin:100% 0;top:979.99px;font-family:'Liberation Sans', sans-serif;font-weight:normal;font-size:17.5px;line-height:17.5px;color:#2b2b2b;transform:scaleX(1.0800);">$3,000</div>
<div class="t" style="right:851.50px;transform-origin:100% 0;top:979.99px;font-family:'Liberation Sans', sans-serif;font-weight:normal;font-size:17.5px;line-height:17.5px;color:#2b2b2b;transform:scaleX(1.0800);">$3,000</div>
<div class="t" style="right:735.50px;transform-origin:100% 0;top:979.99px;font-family:'Liberation Sans', sans-serif;font-weight:normal;font-size:17.5px;line-height:17.5px;color:#2b2b2b;transform:scaleX(1.0800);">$3,000</div>
<div class="t" style="right:619.50px;transform-origin:100% 0;top:979.99px;font-family:'Liberation Sans', sans-serif;font-weight:normal;font-size:17.5px;line-height:17.5px;color:#2b2b2b;transform:scaleX(1.0800);">$3,000</div>
<div class="t" style="right:503.50px;transform-origin:100% 0;top:979.99px;font-family:'Liberation Sans', sans-serif;font-weight:normal;font-size:17.5px;line-height:17.5px;color:#2b2b2b;transform:scaleX(1.0800);">$3,000</div>
<div class="t" style="right:387.50px;transform-origin:100% 0;top:979.99px;font-family:'Liberation Sans', sans-serif;font-weight:normal;font-size:17.5px;line-height:17.5px;color:#2b2b2b;transform:scaleX(1.0800);">$3,000</div>
<div class="t" style="right:271.50px;transform-origin:100% 0;top:979.99px;font-family:'Liberation Sans', sans-serif;font-weight:normal;font-size:17.5px;line-height:17.5px;color:#2b2b2b;transform:scaleX(1.0800);">$3,000</div>
<div class="t" style="right:155.50px;transform-origin:100% 0;top:979.99px;font-family:'Liberation Sans', sans-serif;font-weight:normal;font-size:17.5px;line-height:17.5px;color:#2b2b2b;transform:scaleX(1.0800);">$36,000</div>
<div style="left:20px;top:1001px;width:241px;height:25px;overflow:hidden"><div class="t" style="left:3.78px;transform-origin:0 0;top:2.78px;font-family:'Liberation Serif', serif;font-weight:bold;font-size:19.6px;line-height:19.6px;color:#000;transform:scaleX(1.0378);">Total OpEx</div></div>
<div class="t" style="right:1546.50px;transform-origin:100% 0;top:1005.99px;font-family:'Liberation Sans', sans-serif;font-weight:normal;font-size:17.5px;line-height:17.5px;color:#2b2b2b;transform:scaleX(1.0800);">$40,500</div>
<div class="t" style="right:1431.50px;transform-origin:100% 0;top:1005.99px;font-family:'Liberation Sans', sans-serif;font-weight:normal;font-size:17.5px;line-height:17.5px;color:#2b2b2b;transform:scaleX(1.0800);">$40,500</div>
<div class="t" style="right:1315.50px;transform-origin:100% 0;top:1005.99px;font-family:'Liberation Sans', sans-serif;font-weight:normal;font-size:17.5px;line-height:17.5px;color:#2b2b2b;transform:scaleX(1.0800);">$40,500</div>
<div class="t" style="right:1199.50px;transform-origin:100% 0;top:1005.99px;font-family:'Liberation Sans', sans-serif;font-weight:normal;font-size:17.5px;line-height:17.5px;color:#2b2b2b;transform:scaleX(1.0800);">$44,000</div>
<div class="t" style="right:1083.50px;transform-origin:100% 0;top:1005.99px;font-family:'Liberation Sans', sans-serif;font-weight:normal;font-size:17.5px;line-height:17.5px;color:#2b2b2b;transform:scaleX(1.0800);">$44,000</div>
<div class="t" style="right:967.50px;transform-origin:100% 0;top:1005.99px;font-family:'Liberation Sans', sans-serif;font-weight:normal;font-size:17.5px;line-height:17.5px;color:#2b2b2b;transform:scaleX(1.0800);">$44,000</div>
<div class="t" style="right:851.50px;transform-origin:100% 0;top:1005.99px;font-family:'Liberation Sans', sans-serif;font-weight:normal;font-size:17.5px;line-height:17.5px;color:#2b2b2b;transform:scaleX(1.0800);">$47,700</div>
<div class="t" style="right:735.50px;transform-origin:100% 0;top:1005.99px;font-family:'Liberation Sans', sans-serif;font-weight:normal;font-size:17.5px;line-height:17.5px;color:#2b2b2b;transform:scaleX(1.0800);">$47,700</div>
<div class="t" style="right:619.50px;transform-origin:100% 0;top:1005.99px;font-family:'Liberation Sans', sans-serif;font-weight:normal;font-size:17.5px;line-height:17.5px;color:#2b2b2b;transform:scaleX(1.0800);">$47,700</div>
<div class="t" style="right:503.50px;transform-origin:100% 0;top:1005.99px;font-family:'Liberation Sans', sans-serif;font-weight:normal;font-size:17.5px;line-height:17.5px;color:#2b2b2b;transform:scaleX(1.0800);">$51,620</div>
<div class="t" style="right:387.50px;transform-origin:100% 0;top:1005.99px;font-family:'Liberation Sans', sans-serif;font-weight:normal;font-size:17.5px;line-height:17.5px;color:#2b2b2b;transform:scaleX(1.0800);">$51,620</div>
<div class="t" style="right:271.50px;transform-origin:100% 0;top:1005.99px;font-family:'Liberation Sans', sans-serif;font-weight:normal;font-size:17.5px;line-height:17.5px;color:#2b2b2b;transform:scaleX(1.0800);">$51,620</div>
<div class="t" style="right:155.50px;transform-origin:100% 0;top:1005.99px;font-family:'Liberation Sans', sans-serif;font-weight:normal;font-size:17.5px;line-height:17.5px;color:#2b2b2b;transform:scaleX(1.0800);">$551,460</div>
<div style="left:20px;top:1079px;width:241px;height:25px;overflow:hidden"><div class="t" style="left:3.75px;transform-origin:0 0;top:2.79px;font-family:'Liberation Serif', serif;font-weight:bold;font-size:19.6px;line-height:19.6px;color:#000;transform:scaleX(1.0902);">Monthly Revenue</div></div>
<div class="t" style="right:1546.50px;transform-origin:100% 0;top:1083.99px;font-family:'Liberation Sans', sans-serif;font-weight:normal;font-size:17.5px;line-height:17.5px;color:#2b2b2b;transform:scaleX(1.0800);">$110,000</div>
<div class="t" style="right:1431.50px;transform-origin:100% 0;top:1083.99px;font-family:'Liberation Sans', sans-serif;font-weight:normal;font-size:17.5px;line-height:17.5px;color:#2b2b2b;transform:scaleX(1.0800);">$121,000</div>
<div class="t" style="right:1315.50px;transform-origin:100% 0;top:1083.99px;font-family:'Liberation Sans', sans-serif;font-weight:normal;font-size:17.5px;line-height:17.5px;color:#2b2b2b;transform:scaleX(1.0800);">$133,100</div>
<div class="t" style="right:1199.50px;transform-origin:100% 0;top:1083.99px;font-family:'Liberation Sans', sans-serif;font-weight:normal;font-size:17.5px;line-height:17.5px;color:#2b2b2b;transform:scaleX(1.0800);">$146,410</div>
<div class="t" style="right:1083.50px;transform-origin:100% 0;top:1083.99px;font-family:'Liberation Sans', sans-serif;font-weight:normal;font-size:17.5px;line-height:17.5px;color:#2b2b2b;transform:scaleX(1.0800);">$161,051</div>
<div class="t" style="right:967.50px;transform-origin:100% 0;top:1083.99px;font-family:'Liberation Sans', sans-serif;font-weight:normal;font-size:17.5px;line-height:17.5px;color:#2b2b2b;transform:scaleX(1.0800);">$177,156</div>
<div class="t" style="right:851.50px;transform-origin:100% 0;top:1083.99px;font-family:'Liberation Sans', sans-serif;font-weight:normal;font-size:17.5px;line-height:17.5px;color:#2b2b2b;transform:scaleX(1.0800);">$194,872</div>
<div class="t" style="right:735.50px;transform-origin:100% 0;top:1083.99px;font-family:'Liberation Sans', sans-serif;font-weight:normal;font-size:17.5px;line-height:17.5px;color:#2b2b2b;transform:scaleX(1.0800);">$214,359</div>
<div class="t" style="right:619.50px;transform-origin:100% 0;top:1083.99px;font-family:'Liberation Sans', sans-serif;font-weight:normal;font-size:17.5px;line-height:17.5px;color:#2b2b2b;transform:scaleX(1.0800);">$235,795</div>
<div class="t" style="right:503.50px;transform-origin:100% 0;top:1083.99px;font-family:'Liberation Sans', sans-serif;font-weight:normal;font-size:17.5px;line-height:17.5px;color:#2b2b2b;transform:scaleX(1.0800);">$259,374</div>
<div class="t" style="right:387.50px;transform-origin:100% 0;top:1083.99px;font-family:'Liberation Sans', sans-serif;font-weight:normal;font-size:17.5px;line-height:17.5px;color:#2b2b2b;transform:scaleX(1.0800);">$285,312</div>
<div class="t" style="right:271.50px;transform-origin:100% 0;top:1083.99px;font-family:'Liberation Sans', sans-serif;font-weight:normal;font-size:17.5px;line-height:17.5px;color:#2b2b2b;transform:scaleX(1.0800);">$313,843</div>
<div class="t" style="right:155.50px;transform-origin:100% 0;top:1083.99px;font-family:'Liberation Sans', sans-serif;font-weight:normal;font-size:17.5px;line-height:17.5px;color:#2b2b2b;transform:scaleX(1.0800);">$2,352,271</div>
<div style="left:20px;top:1105px;width:241px;height:24px;overflow:hidden"><div class="t" style="left:3.78px;transform-origin:0 0;top:1.79px;font-family:'Liberation Serif', serif;font-weight:bold;font-size:19.6px;line-height:19.6px;color:#000;transform:scaleX(1.0378);">Total OpEx</div></div>
<div class="t" style="right:1546.50px;transform-origin:100% 0;top:1108.99px;font-family:'Liberation Sans', sans-serif;font-weight:normal;font-size:17.5px;line-height:17.5px;color:#2b2b2b;transform:scaleX(1.0800);">$40,500</div>
<div class="t" style="right:1431.50px;transform-origin:100% 0;top:1108.99px;font-family:'Liberation Sans', sans-serif;font-weight:normal;font-size:17.5px;line-height:17.5px;color:#2b2b2b;transform:scaleX(1.0800);">$40,500</div>
<div class="t" style="right:1315.50px;transform-origin:100% 0;top:1108.99px;font-family:'Liberation Sans', sans-serif;font-weight:normal;font-size:17.5px;line-height:17.5px;color:#2b2b2b;transform:scaleX(1.0800);">$40,500</div>
<div class="t" style="right:1199.50px;transform-origin:100% 0;top:1108.99px;font-family:'Liberation Sans', sans-serif;font-weight:normal;font-size:17.5px;line-height:17.5px;color:#2b2b2b;transform:scaleX(1.0800);">$44,000</div>
<div class="t" style="right:1083.50px;transform-origin:100% 0;top:1108.99px;font-family:'Liberation Sans', sans-serif;font-weight:normal;font-size:17.5px;line-height:17.5px;color:#2b2b2b;transform:scaleX(1.0800);">$44,000</div>
<div class="t" style="right:967.50px;transform-origin:100% 0;top:1108.99px;font-family:'Liberation Sans', sans-serif;font-weight:normal;font-size:17.5px;line-height:17.5px;color:#2b2b2b;transform:scaleX(1.0800);">$44,000</div>
<div class="t" style="right:851.50px;transform-origin:100% 0;top:1108.99px;font-family:'Liberation Sans', sans-serif;font-weight:normal;font-size:17.5px;line-height:17.5px;color:#2b2b2b;transform:scaleX(1.0800);">$47,700</div>
<div class="t" style="right:735.50px;transform-origin:100% 0;top:1108.99px;font-family:'Liberation Sans', sans-serif;font-weight:normal;font-size:17.5px;line-height:17.5px;color:#2b2b2b;transform:scaleX(1.0800);">$47,700</div>
<div class="t" style="right:619.50px;transform-origin:100% 0;top:1108.99px;font-family:'Liberation Sans', sans-serif;font-weight:normal;font-size:17.5px;line-height:17.5px;color:#2b2b2b;transform:scaleX(1.0800);">$47,700</div>
<div class="t" style="right:503.50px;transform-origin:100% 0;top:1108.99px;font-family:'Liberation Sans', sans-serif;font-weight:normal;font-size:17.5px;line-height:17.5px;color:#2b2b2b;transform:scaleX(1.0800);">$51,620</div>
<div class="t" style="right:387.50px;transform-origin:100% 0;top:1108.99px;font-family:'Liberation Sans', sans-serif;font-weight:normal;font-size:17.5px;line-height:17.5px;color:#2b2b2b;transform:scaleX(1.0800);">$51,620</div>
<div class="t" style="right:271.50px;transform-origin:100% 0;top:1108.99px;font-family:'Liberation Sans', sans-serif;font-weight:normal;font-size:17.5px;line-height:17.5px;color:#2b2b2b;transform:scaleX(1.0800);">$51,620</div>
<div class="t" style="right:155.50px;transform-origin:100% 0;top:1108.99px;font-family:'Liberation Sans', sans-serif;font-weight:normal;font-size:17.5px;line-height:17.5px;color:#2b2b2b;transform:scaleX(1.0800);">$551,460</div>
<div style="left:20px;top:1130px;width:241px;height:25px;overflow:hidden"><div class="t" style="left:3.82px;transform-origin:0 0;top:2.79px;font-family:'Liberation Serif', serif;font-weight:bold;font-size:19.6px;line-height:19.6px;color:#000;transform:scaleX(0.9311);">EBITDA</div></div>
<div class="t" style="right:1546.50px;transform-origin:100% 0;top:1134.99px;font-family:'Liberation Sans', sans-serif;font-weight:normal;font-size:17.5px;line-height:17.5px;color:#2b2b2b;transform:scaleX(1.0800);">$69,500</div>
<div class="t" style="right:1431.50px;transform-origin:100% 0;top:1134.99px;font-family:'Liberation Sans', sans-serif;font-weight:normal;font-size:17.5px;line-height:17.5px;color:#2b2b2b;transform:scaleX(1.0800);">$80,500</div>
<div class="t" style="right:1315.50px;transform-origin:100% 0;top:1134.99px;font-family:'Liberation Sans', sans-serif;font-weight:normal;font-size:17.5px;line-height:17.5px;color:#2b2b2b;transform:scaleX(1.0800);">$92,600</div>
<div class="t" style="right:1199.50px;transform-origin:100% 0;top:1134.99px;font-family:'Liberation Sans', sans-serif;font-weight:normal;font-size:17.5px;line-height:17.5px;color:#2b2b2b;transform:scaleX(1.0800);">$102,410</div>
<div class="t" style="right:1083.50px;transform-origin:100% 0;top:1134.99px;font-family:'Liberation Sans', sans-serif;font-weight:normal;font-size:17.5px;line-height:17.5px;color:#2b2b2b;transform:scaleX(1.0800);">$117,051</div>
<div class="t" style="right:967.50px;transform-origin:100% 0;top:1134.99px;font-family:'Liberation Sans', sans-serif;font-weight:normal;font-size:17.5px;line-height:17.5px;color:#2b2b2b;transform:scaleX(1.0800);">$133,156</div>
<div class="t" style="right:851.50px;transform-origin:100% 0;top:1134.99px;font-family:'Liberation Sans', sans-serif;font-weight:normal;font-size:17.5px;line-height:17.5px;color:#2b2b2b;transform:scaleX(1.0800);">$147,172</div>
<div class="t" style="right:735.50px;transform-origin:100% 0;top:1134.99px;font-family:'Liberation Sans', sans-serif;font-weight:normal;font-size:17.5px;line-height:17.5px;color:#2b2b2b;transform:scaleX(1.0800);">$166,659</div>
<div class="t" style="right:619.50px;transform-origin:100% 0;top:1134.99px;font-family:'Liberation Sans', sans-serif;font-weight:normal;font-size:17.5px;line-height:17.5px;color:#2b2b2b;transform:scaleX(1.0800);">$188,095</div>
<div class="t" style="right:503.50px;transform-origin:100% 0;top:1134.99px;font-family:'Liberation Sans', sans-serif;font-weight:normal;font-size:17.5px;line-height:17.5px;color:#2b2b2b;transform:scaleX(1.0800);">$207,754</div>
<div class="t" style="right:387.50px;transform-origin:100% 0;top:1134.99px;font-family:'Liberation Sans', sans-serif;font-weight:normal;font-size:17.5px;line-height:17.5px;color:#2b2b2b;transform:scaleX(1.0800);">$233,692</div>
<div class="t" style="right:271.50px;transform-origin:100% 0;top:1134.99px;font-family:'Liberation Sans', sans-serif;font-weight:normal;font-size:17.5px;line-height:17.5px;color:#2b2b2b;transform:scaleX(1.0800);">$262,223</div>
<div class="t" style="right:155.50px;transform-origin:100% 0;top:1134.99px;font-family:'Liberation Sans', sans-serif;font-weight:normal;font-size:17.5px;line-height:17.5px;color:#2b2b2b;transform:scaleX(1.0800);">$1,800,811</div>
<div style="left:20px;top:1156px;width:241px;height:25px;overflow:hidden"><div class="t" style="left:2.80px;transform-origin:0 0;top:2.79px;font-family:'Liberation Serif', serif;font-weight:bold;font-size:19.6px;line-height:19.6px;color:#000;transform:scaleX(1.0693);">Starting Cash</div></div>
<div class="t" style="right:1546.50px;transform-origin:100% 0;top:1160.99px;font-family:'Liberation Sans', sans-serif;font-weight:normal;font-size:17.5px;line-height:17.5px;color:#2b2b2b;transform:scaleX(1.0800);">$2,000,000</div>
<div class="t" style="right:1431.50px;transform-origin:100% 0;top:1160.99px;font-family:'Liberation Sans', sans-serif;font-weight:normal;font-size:17.5px;line-height:17.5px;color:#2b2b2b;transform:scaleX(1.0800);">$2,069,500</div>
<div class="t" style="right:1315.50px;transform-origin:100% 0;top:1160.99px;font-family:'Liberation Sans', sans-serif;font-weight:normal;font-size:17.5px;line-height:17.5px;color:#2b2b2b;transform:scaleX(1.0800);">$2,150,000</div>
<div class="t" style="right:1199.50px;transform-origin:100% 0;top:1160.99px;font-family:'Liberation Sans', sans-serif;font-weight:normal;font-size:17.5px;line-height:17.5px;color:#2b2b2b;transform:scaleX(1.0800);">$2,242,600</div>
<div class="t" style="right:1083.50px;transform-origin:100% 0;top:1160.99px;font-family:'Liberation Sans', sans-serif;font-weight:normal;font-size:17.5px;line-height:17.5px;color:#2b2b2b;transform:scaleX(1.0800);">$2,345,010</div>
<div class="t" style="right:967.50px;transform-origin:100% 0;top:1160.99px;font-family:'Liberation Sans', sans-serif;font-weight:normal;font-size:17.5px;line-height:17.5px;color:#2b2b2b;transform:scaleX(1.0800);">$2,462,061</div>
<div class="t" style="right:851.50px;transform-origin:100% 0;top:1160.99px;font-family:'Liberation Sans', sans-serif;font-weight:normal;font-size:17.5px;line-height:17.5px;color:#2b2b2b;transform:scaleX(1.0800);">$2,595,217</div>
<div class="t" style="right:735.50px;transform-origin:100% 0;top:1160.99px;font-family:'Liberation Sans', sans-serif;font-weight:normal;font-size:17.5px;line-height:17.5px;color:#2b2b2b;transform:scaleX(1.0800);">$2,742,389</div>
<div class="t" style="right:619.50px;transform-origin:100% 0;top:1160.99px;font-family:'Liberation Sans', sans-serif;font-weight:normal;font-size:17.5px;line-height:17.5px;color:#2b2b2b;transform:scaleX(1.0800);">$2,909,048</div>
<div class="t" style="right:503.50px;transform-origin:100% 0;top:1160.99px;font-family:'Liberation Sans', sans-serif;font-weight:normal;font-size:17.5px;line-height:17.5px;color:#2b2b2b;transform:scaleX(1.0800);">$3,097,142</div>
<div class="t" style="right:387.50px;transform-origin:100% 0;top:1160.99px;font-family:'Liberation Sans', sans-serif;font-weight:normal;font-size:17.5px;line-height:17.5px;color:#2b2b2b;transform:scaleX(1.0800);">$3,304,897</div>
<div class="t" style="right:271.50px;transform-origin:100% 0;top:1160.99px;font-family:'Liberation Sans', sans-serif;font-weight:normal;font-size:17.5px;line-height:17.5px;color:#2b2b2b;transform:scaleX(1.0800);">$3,538,588</div>
<div style="left:20px;top:1182px;width:241px;height:25px;overflow:hidden"><div class="t" style="left:3.77px;transform-origin:0 0;top:2.79px;font-family:'Liberation Serif', serif;font-weight:bold;font-size:19.6px;line-height:19.6px;color:#000;transform:scaleX(1.0469);">Ending Cash</div></div>
<div class="t" style="right:1546.50px;transform-origin:100% 0;top:1186.99px;font-family:'Liberation Sans', sans-serif;font-weight:normal;font-size:17.5px;line-height:17.5px;color:#2b2b2b;transform:scaleX(1.0800);">$2,069,500</div>
<div class="t" style="right:1431.50px;transform-origin:100% 0;top:1186.99px;font-family:'Liberation Sans', sans-serif;font-weight:normal;font-size:17.5px;line-height:17.5px;color:#2b2b2b;transform:scaleX(1.0800);">$2,150,000</div>
<div class="t" style="right:1315.50px;transform-origin:100% 0;top:1186.99px;font-family:'Liberation Sans', sans-serif;font-weight:normal;font-size:17.5px;line-height:17.5px;color:#2b2b2b;transform:scaleX(1.0800);">$2,242,600</div>
<div class="t" style="right:1199.50px;transform-origin:100% 0;top:1186.99px;font-family:'Liberation Sans', sans-serif;font-weight:normal;font-size:17.5px;line-height:17.5px;color:#2b2b2b;transform:scaleX(1.0800);">$2,345,010</div>
<div class="t" style="right:1083.50px;transform-origin:100% 0;top:1186.99px;font-family:'Liberation Sans', sans-serif;font-weight:normal;font-size:17.5px;line-height:17.5px;color:#2b2b2b;transform:scaleX(1.0800);">$2,462,061</div>
<div class="t" style="right:967.50px;transform-origin:100% 0;top:1186.99px;font-family:'Liberation Sans', sans-serif;font-weight:normal;font-size:17.5px;line-height:17.5px;color:#2b2b2b;transform:scaleX(1.0800);">$2,595,217</div>
<div class="t" style="right:851.50px;transform-origin:100% 0;top:1186.99px;font-family:'Liberation Sans', sans-serif;font-weight:normal;font-size:17.5px;line-height:17.5px;color:#2b2b2b;transform:scaleX(1.0800);">$2,742,389</div>
<div class="t" style="right:735.50px;transform-origin:100% 0;top:1186.99px;font-family:'Liberation Sans', sans-serif;font-weight:normal;font-size:17.5px;line-height:17.5px;color:#2b2b2b;transform:scaleX(1.0800);">$2,909,048</div>
<div class="t" style="right:619.50px;transform-origin:100% 0;top:1186.99px;font-family:'Liberation Sans', sans-serif;font-weight:normal;font-size:17.5px;line-height:17.5px;color:#2b2b2b;transform:scaleX(1.0800);">$3,097,142</div>
<div class="t" style="right:503.50px;transform-origin:100% 0;top:1186.99px;font-family:'Liberation Sans', sans-serif;font-weight:normal;font-size:17.5px;line-height:17.5px;color:#2b2b2b;transform:scaleX(1.0800);">$3,304,897</div>
<div class="t" style="right:387.50px;transform-origin:100% 0;top:1186.99px;font-family:'Liberation Sans', sans-serif;font-weight:normal;font-size:17.5px;line-height:17.5px;color:#2b2b2b;transform:scaleX(1.0800);">$3,538,588</div>
<div class="t" style="right:271.50px;transform-origin:100% 0;top:1186.99px;font-family:'Liberation Sans', sans-serif;font-weight:normal;font-size:17.5px;line-height:17.5px;color:#2b2b2b;transform:scaleX(1.0800);">$3,800,811</div>
<div class="t" style="right:155.50px;transform-origin:100% 0;top:1186.99px;font-family:'Liberation Sans', sans-serif;font-weight:normal;font-size:17.5px;line-height:17.5px;color:#2b2b2b;transform:scaleX(1.0800);">$3,800,811</div>
<div style="left:0px;top:1423px;width:1920px;height:61px;background:#efefef;"></div>
<div style="left:188px;top:1423px;width:205px;height:53px;background:#fff;border-radius:0 0 9px 9px;box-shadow:0 1px 2px rgba(0,0,0,0.18)"></div>
<div style="left:170px;top:1423px;width:18px;height:7px;background:#fff;"></div>
<div style="left:170px;top:1423px;width:18px;height:7px;background:#efefef;border-top-right-radius:7px"></div>
<div style="left:393px;top:1423px;width:18px;height:7px;background:#fff;"></div>
<div style="left:393px;top:1423px;width:18px;height:7px;background:#efefef;border-top-left-radius:7px"></div>
<div style="left:186px;top:1421px;width:209px;height:2px;background:#fff;"></div>
<div style="left:261px;top:1421px;width:1px;height:2px;background:#e1e1e1;"></div>
<div style="left:377px;top:1421px;width:1px;height:2px;background:#e1e1e1;"></div>
<div class="t" style="left:203.50px;transform-origin:0 0;top:1435.99px;font-family:'Liberation Sans', sans-serif;font-weight:normal;font-size:26px;line-height:26px;color:#242424;transform:scaleX(1.0900);-webkit-text-stroke:0.5px #242424;">Budget Model</div>
<div style="left:204px;top:1467px;width:174px;height:4px;background:#107c41;"></div>
<div class="t" style="left:427.00px;transform-origin:0 0;top:1441.27px;font-family:'Liberation Sans', sans-serif;font-weight:normal;font-size:26.5px;line-height:26.5px;color:#242424;">Dashboard</div>
<div style="left:401px;top:1436px;width:1px;height:34px;background:#c8c8c8;"></div>
<div style="left:582px;top:1436px;width:1px;height:34px;background:#c8c8c8;"></div>
<div style="left:664px;top:1451px;width:21px;height:2px;background:#333;"></div>
<div style="left:674px;top:1441px;width:2px;height:21px;background:#333;"></div>
<svg style="position:absolute;left:0;top:1423px" width="120" height="61"><path d="M31.3 20.3 L22.8 28.9 L31.3 37.3" fill="none" stroke="#8c8c8c" stroke-width="2" stroke-linecap="round" stroke-linejoin="round"/><path d="M85.7 20.3 L94.2 28.9 L85.7 37.3" fill="none" stroke="#8c8c8c" stroke-width="2" stroke-linecap="round" stroke-linejoin="round"/></svg>
<div style="left:1832px;top:1444px;width:4px;height:4px;background:#222;"></div>
<div style="left:1832px;top:1452px;width:4px;height:4px;background:#222;"></div>
<div style="left:1832px;top:1459px;width:4px;height:4px;background:#222;"></div>
<div style="left:1864px;top:1437px;width:100px;height:32px;background:#f5f5f5;border-radius:16px"></div>
<svg style="position:absolute;left:1860px;top:1423px" width="60" height="61"><path d="M14 29.5 L26 21 L26 38 Z" fill="#6f7170" stroke="#6f7170" stroke-width="2" stroke-linejoin="round"/></svg>
<div style="left:1897px;top:1445px;width:60px;height:15px;background:#6f7170;border-radius:8px"></div>
</body></html>
